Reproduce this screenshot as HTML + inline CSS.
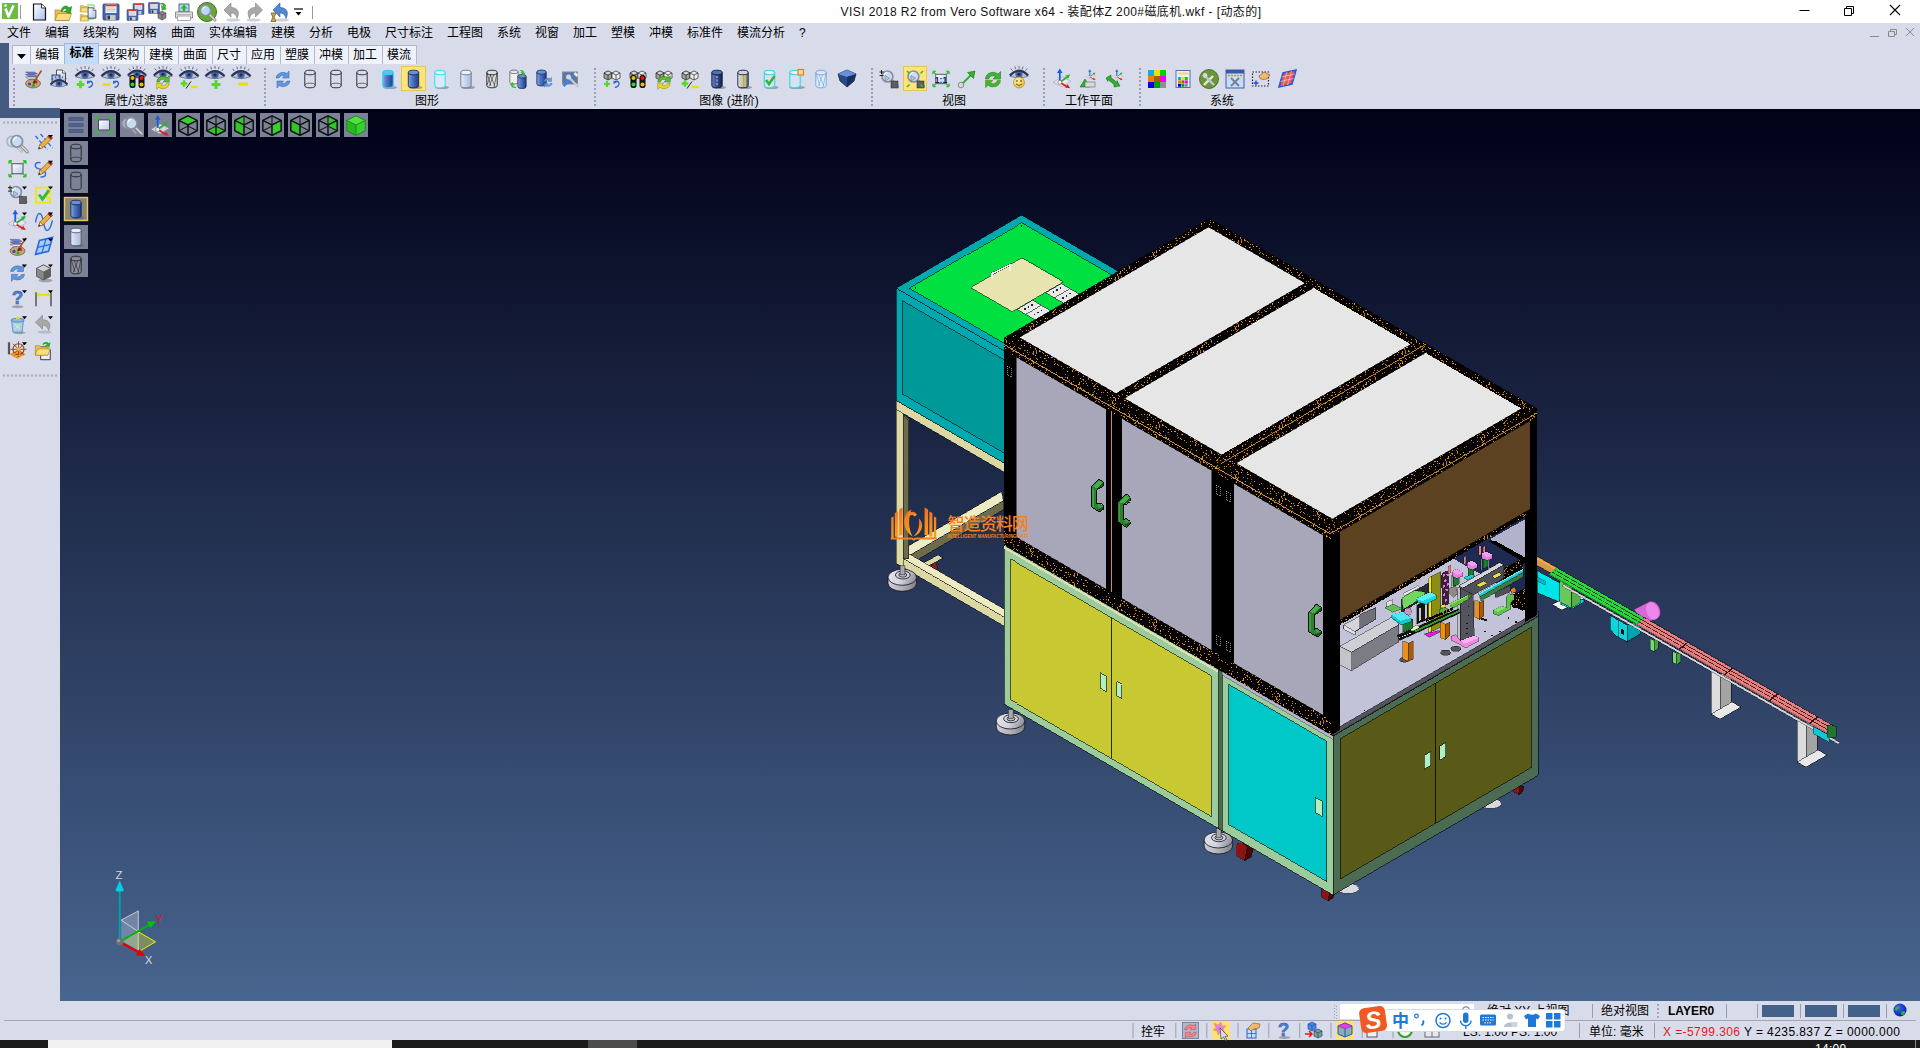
<!DOCTYPE html>
<html lang="zh-CN">
<head>
<meta charset="utf-8">
<title>VISI 2018 R2 from Vero Software x64 - 装配体Z 200#磁底机.wkf - [动态的]</title>
<style>
html,body{margin:0;padding:0;}
body{width:1920px;height:1048px;overflow:hidden;position:relative;background:#d8dcea;font-family:"Liberation Sans","Noto Sans CJK SC",sans-serif;font-size:12px;color:#000;}
.abs{position:absolute;}
#titlebar{left:0;top:0;width:1920px;height:23px;background:#fff;}
#title{left:838px;top:4px;width:426px;letter-spacing:0.42px;height:16px;line-height:16px;font-size:12px;white-space:nowrap;text-align:center;color:#111;}
#menubar{left:0;top:23px;width:1920px;height:20px;background:#d8dcea;}
.mi{position:absolute;top:2px;height:16px;line-height:16px;font-size:12px;white-space:nowrap;color:#000;}
#tabrow{left:0;top:43px;width:1920px;height:21px;background:#d8dcea;}
.tab{position:absolute;top:2px;height:19px;line-height:18px;font-size:12px;text-align:center;background:#eef2fb;border:1px solid #b4b8c6;border-bottom:none;box-sizing:border-box;white-space:nowrap;}
.tab.act{top:0;height:21px;line-height:19px;background:#c4dcf8;border-color:#98b8e0;font-weight:bold;}
#toolbar{left:9px;top:64px;width:1911px;height:44px;background:#d8dcea;}
.glabel{position:absolute;top:94px;height:14px;line-height:14px;font-size:12px;white-space:nowrap;transform:translateX(-50%);}
.grip{position:absolute;width:3px;border-left:2px dotted #9aa0b4;top:68px;height:38px;}
#mdi{left:0;top:43px;width:60px;height:75px;background:#445a80;}
#leftpanel{left:0;top:118px;width:60px;height:884px;background:#d8dcea;}
#viewport{left:60px;top:109px;width:1860px;height:892px;background:linear-gradient(to bottom,#010118 0%,#48658f 100%);overflow:hidden;}
#status1{left:0;top:1001px;width:1920px;height:20px;background:#d8dcea;}
#status2{left:0;top:1021px;width:1920px;height:19px;background:#d8dcea;}
#taskbar{overflow:hidden;left:0;top:1040px;width:1920px;height:8px;background:#1b1b1b;}
.st{position:absolute;white-space:nowrap;font-size:12px;line-height:16px;height:16px;}
.vsep{position:absolute;width:1px;background:#9a9eac;}
.ibtn{position:absolute;width:21px;height:21px;background:#7e8397;}
svg{position:absolute;overflow:visible;}
</style>
</head>
<body>
<div id="titlebar" class="abs"></div>
<div id="title" class="abs">VISI 2018 R2 from Vero Software x64 - 装配体Z 200#磁底机.wkf - [动态的]</div>
<div id="menubar" class="abs">
<span class="mi" style="left:7px">文件</span>
<span class="mi" style="left:45px">编辑</span>
<span class="mi" style="left:83px">线架构</span>
<span class="mi" style="left:133px">网格</span>
<span class="mi" style="left:171px">曲面</span>
<span class="mi" style="left:209px">实体编辑</span>
<span class="mi" style="left:271px">建模</span>
<span class="mi" style="left:309px">分析</span>
<span class="mi" style="left:347px">电极</span>
<span class="mi" style="left:385px">尺寸标注</span>
<span class="mi" style="left:447px">工程图</span>
<span class="mi" style="left:497px">系统</span>
<span class="mi" style="left:535px">视窗</span>
<span class="mi" style="left:573px">加工</span>
<span class="mi" style="left:611px">塑模</span>
<span class="mi" style="left:649px">冲模</span>
<span class="mi" style="left:687px">标准件</span>
<span class="mi" style="left:737px">模流分析</span>
<span class="mi" style="left:799px">?</span>
</div>
<div id="mdi" class="abs"></div>
<div id="tabrow" class="abs" style="left:9px;width:1911px">
<div class="tab" style="left:3.0px;width:18.5px"><svg width="9" height="5" style="left:4px;top:8px" viewBox="0 0 9 5"><path d="M0 0h9L4.5 5z" fill="#000"/></svg></div>
<div class="tab" style="left:20.5px;width:35.5px">编辑</div>
<div class="tab act" style="left:55.0px;width:35.0px">标准</div>
<div class="tab" style="left:89.0px;width:46.5px">线架构</div>
<div class="tab" style="left:134.5px;width:35.0px">建模</div>
<div class="tab" style="left:168.5px;width:35.0px">曲面</div>
<div class="tab" style="left:202.5px;width:35.0px">尺寸</div>
<div class="tab" style="left:236.5px;width:35.0px">应用</div>
<div class="tab" style="left:270.5px;width:35.0px">塑膜</div>
<div class="tab" style="left:304.5px;width:35.0px">冲模</div>
<div class="tab" style="left:338.5px;width:35.0px">加工</div>
<div class="tab" style="left:372.5px;width:35.0px">模流</div>
</div>
<div id="toolbar" class="abs"></div>
<div class="glabel" style="left:136px">属性/过滤器</div>
<div class="glabel" style="left:427px">图形</div>
<div class="glabel" style="left:729px">图像 (进阶)</div>
<div class="glabel" style="left:954px">视图</div>
<div class="glabel" style="left:1089px">工作平面</div>
<div class="glabel" style="left:1222px">系统</div>
<div class="grip" style="left:13px"></div>
<div class="grip" style="left:264px"></div>
<div class="grip" style="left:594px"></div>
<div class="grip" style="left:871px"></div>
<div class="grip" style="left:1043px"></div>
<div class="grip" style="left:1139px"></div>
<div id="leftpanel" class="abs"></div>
<div id="viewport" class="abs">
<svg style="left:-60px;top:-109px" width="1920" height="1048" viewBox="0 0 1920 1048" shape-rendering="crispEdges"><defs>
<linearGradient id="ftg" x1="0" y1="0" x2="1" y2="0"><stop offset="0" stop-color="#d0d0da"/><stop offset="0.5" stop-color="#b0b0ba"/><stop offset="1" stop-color="#808088"/></linearGradient>
<linearGradient id="ftt" x1="0" y1="0" x2="1" y2="0.3"><stop offset="0" stop-color="#e4e4f0"/><stop offset="0.6" stop-color="#d4d4e2"/><stop offset="1" stop-color="#9898a4"/></linearGradient>
<pattern id="fr" width="41" height="37" patternUnits="userSpaceOnUse"><rect width="41" height="37" fill="#040200"/><rect x="6" y="0" width="1" height="1" fill="#b87018"/><rect x="9" y="0" width="1" height="1" fill="#c88020"/><rect x="15" y="0" width="1" height="1" fill="#c88020"/><rect x="21" y="0" width="1" height="1" fill="#d89028"/><rect x="24" y="0" width="1" height="1" fill="#e09830"/><rect x="1" y="1" width="1" height="1" fill="#f0a838"/><rect x="6" y="1" width="1" height="1" fill="#f0a838"/><rect x="12" y="1" width="1" height="1" fill="#e09830"/><rect x="12" y="2" width="1" height="1" fill="#d89028"/><rect x="20" y="2" width="1" height="1" fill="#e09830"/><rect x="31" y="2" width="1" height="1" fill="#b87018"/><rect x="29" y="3" width="1" height="1" fill="#d89028"/><rect x="12" y="4" width="1" height="1" fill="#b87018"/><rect x="22" y="4" width="1" height="1" fill="#c88020"/><rect x="40" y="4" width="1" height="1" fill="#c88020"/><rect x="2" y="5" width="1" height="1" fill="#b87018"/><rect x="7" y="6" width="1" height="1" fill="#f0a838"/><rect x="17" y="6" width="1" height="1" fill="#d89028"/><rect x="21" y="6" width="1" height="1" fill="#b87018"/><rect x="1" y="7" width="1" height="1" fill="#f0a838"/><rect x="22" y="7" width="1" height="1" fill="#b87018"/><rect x="34" y="7" width="1" height="1" fill="#c88020"/><rect x="37" y="7" width="1" height="1" fill="#e09830"/><rect x="40" y="7" width="1" height="1" fill="#b87018"/><rect x="1" y="8" width="1" height="1" fill="#e09830"/><rect x="14" y="8" width="1" height="1" fill="#e09830"/><rect x="22" y="8" width="1" height="1" fill="#e09830"/><rect x="28" y="8" width="1" height="1" fill="#f0a838"/><rect x="16" y="9" width="1" height="1" fill="#b87018"/><rect x="17" y="9" width="1" height="1" fill="#c88020"/><rect x="22" y="9" width="1" height="1" fill="#b87018"/><rect x="3" y="10" width="1" height="1" fill="#c88020"/><rect x="17" y="10" width="1" height="1" fill="#b87018"/><rect x="25" y="10" width="1" height="1" fill="#e09830"/><rect x="29" y="10" width="1" height="1" fill="#e09830"/><rect x="40" y="10" width="1" height="1" fill="#c88020"/><rect x="7" y="11" width="1" height="1" fill="#b87018"/><rect x="15" y="11" width="1" height="1" fill="#e09830"/><rect x="19" y="11" width="1" height="1" fill="#d89028"/><rect x="31" y="11" width="1" height="1" fill="#b87018"/><rect x="5" y="12" width="1" height="1" fill="#c88020"/><rect x="13" y="12" width="1" height="1" fill="#f0a838"/><rect x="37" y="12" width="1" height="1" fill="#f0a838"/><rect x="40" y="12" width="1" height="1" fill="#f0a838"/><rect x="13" y="13" width="1" height="1" fill="#c88020"/><rect x="17" y="13" width="1" height="1" fill="#d89028"/><rect x="20" y="13" width="1" height="1" fill="#e09830"/><rect x="26" y="13" width="1" height="1" fill="#d89028"/><rect x="30" y="13" width="1" height="1" fill="#d89028"/><rect x="5" y="14" width="1" height="1" fill="#c88020"/><rect x="12" y="14" width="1" height="1" fill="#e09830"/><rect x="13" y="14" width="1" height="1" fill="#d89028"/><rect x="29" y="14" width="1" height="1" fill="#b87018"/><rect x="34" y="14" width="1" height="1" fill="#c88020"/><rect x="10" y="15" width="1" height="1" fill="#e09830"/><rect x="21" y="15" width="1" height="1" fill="#c88020"/><rect x="28" y="15" width="1" height="1" fill="#e09830"/><rect x="35" y="15" width="1" height="1" fill="#c88020"/><rect x="36" y="15" width="1" height="1" fill="#e09830"/><rect x="10" y="16" width="1" height="1" fill="#b87018"/><rect x="27" y="16" width="1" height="1" fill="#c88020"/><rect x="28" y="16" width="1" height="1" fill="#b87018"/><rect x="31" y="16" width="1" height="1" fill="#d89028"/><rect x="0" y="17" width="1" height="1" fill="#f0a838"/><rect x="2" y="17" width="1" height="1" fill="#e09830"/><rect x="11" y="17" width="1" height="1" fill="#b87018"/><rect x="14" y="17" width="1" height="1" fill="#c88020"/><rect x="40" y="17" width="1" height="1" fill="#c88020"/><rect x="8" y="18" width="1" height="1" fill="#d89028"/><rect x="11" y="18" width="1" height="1" fill="#b87018"/><rect x="14" y="18" width="1" height="1" fill="#f0a838"/><rect x="15" y="18" width="1" height="1" fill="#b87018"/><rect x="28" y="18" width="1" height="1" fill="#b87018"/><rect x="29" y="18" width="1" height="1" fill="#b87018"/><rect x="2" y="19" width="1" height="1" fill="#c88020"/><rect x="4" y="19" width="1" height="1" fill="#f0a838"/><rect x="8" y="19" width="1" height="1" fill="#c88020"/><rect x="11" y="19" width="1" height="1" fill="#d89028"/><rect x="17" y="19" width="1" height="1" fill="#b87018"/><rect x="32" y="19" width="1" height="1" fill="#c88020"/><rect x="7" y="20" width="1" height="1" fill="#b87018"/><rect x="8" y="20" width="1" height="1" fill="#b87018"/><rect x="11" y="20" width="1" height="1" fill="#b87018"/><rect x="18" y="20" width="1" height="1" fill="#c88020"/><rect x="39" y="20" width="1" height="1" fill="#e09830"/><rect x="3" y="21" width="1" height="1" fill="#c88020"/><rect x="8" y="21" width="1" height="1" fill="#d89028"/><rect x="28" y="21" width="1" height="1" fill="#c88020"/><rect x="0" y="22" width="1" height="1" fill="#e09830"/><rect x="10" y="22" width="1" height="1" fill="#f0a838"/><rect x="20" y="22" width="1" height="1" fill="#f0a838"/><rect x="22" y="22" width="1" height="1" fill="#e09830"/><rect x="27" y="22" width="1" height="1" fill="#b87018"/><rect x="35" y="22" width="1" height="1" fill="#d89028"/><rect x="37" y="22" width="1" height="1" fill="#b87018"/><rect x="30" y="23" width="1" height="1" fill="#b87018"/><rect x="15" y="24" width="1" height="1" fill="#d89028"/><rect x="23" y="24" width="1" height="1" fill="#f0a838"/><rect x="26" y="24" width="1" height="1" fill="#f0a838"/><rect x="27" y="24" width="1" height="1" fill="#e09830"/><rect x="35" y="24" width="1" height="1" fill="#d89028"/><rect x="0" y="25" width="1" height="1" fill="#b87018"/><rect x="5" y="25" width="1" height="1" fill="#d89028"/><rect x="11" y="25" width="1" height="1" fill="#d89028"/><rect x="19" y="25" width="1" height="1" fill="#f0a838"/><rect x="20" y="25" width="1" height="1" fill="#b87018"/><rect x="12" y="26" width="1" height="1" fill="#d89028"/><rect x="29" y="26" width="1" height="1" fill="#c88020"/><rect x="3" y="27" width="1" height="1" fill="#b87018"/><rect x="6" y="27" width="1" height="1" fill="#d89028"/><rect x="7" y="27" width="1" height="1" fill="#e09830"/><rect x="21" y="27" width="1" height="1" fill="#d89028"/><rect x="33" y="27" width="1" height="1" fill="#b87018"/><rect x="34" y="27" width="1" height="1" fill="#e09830"/><rect x="1" y="28" width="1" height="1" fill="#d89028"/><rect x="8" y="28" width="1" height="1" fill="#b87018"/><rect x="11" y="28" width="1" height="1" fill="#f0a838"/><rect x="17" y="28" width="1" height="1" fill="#e09830"/><rect x="29" y="28" width="1" height="1" fill="#b87018"/><rect x="8" y="29" width="1" height="1" fill="#d89028"/><rect x="1" y="30" width="1" height="1" fill="#b87018"/><rect x="4" y="30" width="1" height="1" fill="#d89028"/><rect x="6" y="30" width="1" height="1" fill="#d89028"/><rect x="8" y="30" width="1" height="1" fill="#f0a838"/><rect x="17" y="30" width="1" height="1" fill="#e09830"/><rect x="18" y="30" width="1" height="1" fill="#d89028"/><rect x="30" y="30" width="1" height="1" fill="#b87018"/><rect x="5" y="31" width="1" height="1" fill="#c88020"/><rect x="20" y="31" width="1" height="1" fill="#f0a838"/><rect x="29" y="31" width="1" height="1" fill="#e09830"/><rect x="32" y="31" width="1" height="1" fill="#e09830"/><rect x="5" y="32" width="1" height="1" fill="#f0a838"/><rect x="33" y="32" width="1" height="1" fill="#c88020"/><rect x="5" y="33" width="1" height="1" fill="#b87018"/><rect x="6" y="33" width="1" height="1" fill="#b87018"/><rect x="8" y="33" width="1" height="1" fill="#c88020"/><rect x="13" y="33" width="1" height="1" fill="#e09830"/><rect x="36" y="33" width="1" height="1" fill="#d89028"/><rect x="1" y="34" width="1" height="1" fill="#c88020"/><rect x="3" y="34" width="1" height="1" fill="#c88020"/><rect x="7" y="34" width="1" height="1" fill="#e09830"/><rect x="17" y="34" width="1" height="1" fill="#d89028"/><rect x="6" y="35" width="1" height="1" fill="#e09830"/><rect x="21" y="35" width="1" height="1" fill="#b87018"/><rect x="38" y="35" width="1" height="1" fill="#b87018"/><rect x="7" y="36" width="1" height="1" fill="#d89028"/></pattern>
</defs>
<polygon points="908.4,556.0 1003.5,500.6 1003.5,509.6 908.4,565.0" fill="#6c6c4c" stroke="#000" stroke-width="0.5" />
<polygon points="899.8,551.0 1001.7,491.5 1003.5,500.6 908.4,556.0" fill="#ecebc4" stroke="#000" stroke-width="0.5" />
<polygon points="918.0,566.0 938.0,555.0 943.0,558.0 923.0,569.0" fill="#dcd8a4" stroke="#000" stroke-width="0.5" />
<polygon points="931.0,565.0 936.0,562.0 938.0,570.0 933.0,573.0" fill="#802020" stroke="#000" stroke-width="0.4" />
<polygon points="896.3,554.5 1004.9,617.5 1004.9,626.5 896.3,563.5" fill="#dcd8a4" stroke="#000" stroke-width="0.5" />
<polygon points="896.3,554.5 910.1,554.5 1011.8,613.5 1004.9,617.5" fill="#ecebc4" stroke="#000" stroke-width="0.5" />
<polygon points="896.3,400.5 903.2,404.5 903.2,567.5 896.3,563.5" fill="#dcd8a4" stroke="#000" stroke-width="0.5" />
<polygon points="903.2,413.5 908.9,419.8 908.9,558.8 903.2,558.5" fill="#6c6c4c" stroke="#000" stroke-width="0.5" />
<polygon points="896.3,400.5 1004.9,463.5 1004.9,472.5 896.3,409.5" fill="#dcd8a4" stroke="#000" stroke-width="0.5" />
<g shape-rendering="auto">
<path d="M888.0 577.3 v6 a14.3 8 0 0 0 28.6 0 v-6 z" fill="url(#ftg)" stroke="#111" stroke-width="0.8"/>
<ellipse cx="902.3" cy="577.3" rx="14.3" ry="8" fill="url(#ftt)" stroke="#111" stroke-width="0.8"/>
<ellipse cx="902.8" cy="575.0" rx="7.4" ry="4" fill="#d0d0da" stroke="#111" stroke-width="0.8"/>
<ellipse cx="902.8" cy="575.0" rx="4" ry="2.2" fill="#b8b8c4" stroke="#111" stroke-width="0.7"/>
<rect x="900.1" y="565.8" width="4.8" height="9" fill="#a8a8b2" stroke="#222" stroke-width="0.5"/>
</g>
<polygon points="896.3,288.2 1004.0,350.7 1004.0,463.0 896.3,400.5" fill="#00a8b0" stroke="#000" stroke-width="0.6" />
<polygon points="902.4,300.7 1004.0,359.7 1004.0,453.0 902.4,394.0" fill="#009999" stroke="#000" stroke-width="0.6" />
<polygon points="896.3,288.2 1021.6,215.1 1129.3,277.6 1004.0,350.7" fill="#00a8b0" stroke="#000" stroke-width="0.6" />
<polygon points="909.3,288.2 1021.6,222.7 1122.8,281.4 1010.5,346.9" fill="#00e040" stroke="#000" stroke-width="0.6" />
<polygon points="970.7,287.6 1021.5,258.0 1063.0,282.1 1012.3,311.7" fill="#e8e4b0" stroke="#000" stroke-width="0.5" />
<polygon points="1045.7,292.8 1061.3,283.7 1079.4,294.2 1063.9,303.3" fill="#e8e8e8" stroke="#000" stroke-width="0.5" />
<line x1="1054.3" y1="297.8" x2="1069.9" y2="288.7" stroke="#444" stroke-width="0.8" />
<circle cx="1053.5" cy="292.3" r="0.9" fill="#222"/>
<circle cx="1060.4" cy="288.2" r="0.9" fill="#222"/>
<circle cx="1063.0" cy="297.8" r="0.9" fill="#222"/>
<circle cx="1069.9" cy="293.7" r="0.9" fill="#222"/>
<circle cx="1056.9" cy="290.2" r="0.9" fill="#222"/>
<circle cx="1066.4" cy="295.8" r="0.9" fill="#222"/>
<polygon points="1017.2,309.4 1032.7,300.3 1050.9,310.9 1035.4,319.9" fill="#e8e8e8" stroke="#000" stroke-width="0.5" />
<line x1="1025.8" y1="314.4" x2="1041.4" y2="305.3" stroke="#444" stroke-width="0.8" />
<circle cx="1025.0" cy="308.9" r="0.9" fill="#222"/>
<circle cx="1031.9" cy="304.9" r="0.9" fill="#222"/>
<circle cx="1034.5" cy="314.4" r="0.9" fill="#222"/>
<circle cx="1041.4" cy="310.4" r="0.9" fill="#222"/>
<circle cx="1028.4" cy="306.9" r="0.9" fill="#222"/>
<circle cx="1037.9" cy="312.4" r="0.9" fill="#222"/>
<polyline points="992.0,278.0 992.0,273.5 1010.0,265.0 1010.0,271.0" fill="none" stroke="#555" stroke-width="2.4" />
<polyline points="992.0,278.0 992.0,273.5 1010.0,265.0 1010.0,271.0" fill="none" stroke="#f0f0f0" stroke-width="1.4" />
<circle cx="1021.6" cy="226.2" r="0.8" fill="#111"/>
<circle cx="915.3" cy="288.2" r="0.8" fill="#111"/>
<g shape-rendering="auto">
<path d="M996.2 721.0 v6 a14.3 8 0 0 0 28.6 0 v-6 z" fill="url(#ftg)" stroke="#111" stroke-width="0.8"/>
<ellipse cx="1010.5" cy="721.0" rx="14.3" ry="8" fill="url(#ftt)" stroke="#111" stroke-width="0.8"/>
<ellipse cx="1011.0" cy="718.7" rx="7.4" ry="4" fill="#d0d0da" stroke="#111" stroke-width="0.8"/>
<ellipse cx="1011.0" cy="718.7" rx="4" ry="2.2" fill="#b8b8c4" stroke="#111" stroke-width="0.7"/>
<rect x="1008.3" y="709.5" width="4.8" height="9" fill="#a8a8b2" stroke="#222" stroke-width="0.5"/>
</g>
<g shape-rendering="auto">
<path d="M1204.1 840.0 v6 a14.3 8 0 0 0 28.6 0 v-6 z" fill="url(#ftg)" stroke="#111" stroke-width="0.8"/>
<ellipse cx="1218.4" cy="840.0" rx="14.3" ry="8" fill="url(#ftt)" stroke="#111" stroke-width="0.8"/>
<ellipse cx="1218.9" cy="837.7" rx="7.4" ry="4" fill="#d0d0da" stroke="#111" stroke-width="0.8"/>
<ellipse cx="1218.9" cy="837.7" rx="4" ry="2.2" fill="#b8b8c4" stroke="#111" stroke-width="0.7"/>
<rect x="1216.2" y="828.5" width="4.8" height="9" fill="#a8a8b2" stroke="#222" stroke-width="0.5"/>
</g>
<ellipse cx="1490.3" cy="803.5" rx="11" ry="5" fill="#d8d8de" stroke="#333" stroke-width="0.5"/>
<ellipse cx="1348.0" cy="888.5" rx="11" ry="5" fill="#d8d8de" stroke="#333" stroke-width="0.5"/>
<polygon points="1236.5,843.9 1242.7,842.9 1253.7,848.1 1250.8,857.2 1244.6,860.6 1236.0,855.3" fill="#4c0808" stroke="#000" stroke-width="0.6" />
<polygon points="1236.5,843.9 1242.7,842.9 1247.0,847.5 1244.6,860.6 1236.0,855.3" fill="#8c1414" />
<line x1="1247.0" y1="847.5" x2="1244.6" y2="860.6" stroke="#200" stroke-width="0.8" />
<polygon points="1322.0,888.3 1326.7,887.5 1334.9,891.5 1332.7,898.3 1328.1,900.8 1321.6,896.9" fill="#4c0808" stroke="#000" stroke-width="0.6" />
<polygon points="1322.0,888.3 1326.7,887.5 1329.9,891.0 1328.1,900.8 1321.6,896.9" fill="#8c1414" />
<line x1="1329.9" y1="891.0" x2="1328.1" y2="900.8" stroke="#200" stroke-width="0.8" />
<polygon points="1513.6,784.4 1517.3,783.8 1523.9,787.0 1522.2,792.4 1518.5,794.5 1513.3,791.3" fill="#4c0808" stroke="#000" stroke-width="0.6" />
<polygon points="1513.6,784.4 1517.3,783.8 1519.9,786.6 1518.5,794.5 1513.3,791.3" fill="#8c1414" />
<line x1="1519.9" y1="786.6" x2="1518.5" y2="794.5" stroke="#200" stroke-width="0.8" />
<polygon points="1004.0,545.0 1220.6,670.7 1220.6,829.7 1004.0,704.0" fill="#9ccc9c" stroke="#000" stroke-width="0.6" />
<polygon points="1004.0,546.2 1220.6,671.9 1220.6,674.2 1004.0,548.5" fill="#e0e0b8" />
<polygon points="1010.5,559.2 1211.3,675.7 1211.3,816.5 1010.5,700.0" fill="#c8c832" stroke="#000" stroke-width="0.6" />
<line x1="1111.3" y1="617.6" x2="1111.3" y2="758.4" stroke="#000" stroke-width="0.8" />
<polygon points="1100.2,672.7 1106.0,676.0 1106.0,691.5 1100.2,688.2" fill="#b0f0c0" stroke="#000" stroke-width="0.6" />
<polygon points="1116.5,681.5 1121.8,684.5 1121.8,699.0 1116.5,696.0" fill="#b0f0c0" stroke="#000" stroke-width="0.6" />
<polygon points="1218.4,669.4 1222.8,672.0 1222.8,831.0 1218.4,828.4" fill="#4a6a50" stroke="#000" stroke-width="0.4" />
<polygon points="1222.3,671.7 1333.1,736.0 1333.1,895.0 1222.3,830.7" fill="#9ccc9c" stroke="#000" stroke-width="0.6" />
<polygon points="1228.7,684.4 1326.8,741.3 1326.8,881.5 1228.7,824.6" fill="#00c8c8" stroke="#000" stroke-width="0.6" />
<polygon points="1222.3,671.7 1333.1,736.0 1333.1,739.5 1222.3,675.2" fill="#b4b4cc" stroke="#000" stroke-width="0.3" />
<polygon points="1315.3,797.4 1322.2,801.4 1322.2,816.5 1315.3,812.5" fill="#b0f0c0" stroke="#000" stroke-width="0.6" />
<polygon points="1333.1,736.0 1538.3,616.3 1538.3,775.3 1333.1,895.0" fill="#4b6b52" stroke="#000" stroke-width="0.6" />
<polygon points="1333.1,731.0 1538.3,611.3 1538.3,616.3 1333.1,736.0" fill="#54545e" stroke="#000" stroke-width="0.4" />
<polygon points="1340.2,738.8 1531.2,627.4 1531.2,767.6 1340.2,879.0" fill="#5a5a18" stroke="#000" stroke-width="0.6" />
<line x1="1435.5" y1="683.2" x2="1435.5" y2="823.4" stroke="#000" stroke-width="0.8" />
<polygon points="1424.1,755.5 1430.7,751.7 1430.7,765.5 1424.1,769.3" fill="#b0f0c0" stroke="#000" stroke-width="0.6" />
<polygon points="1439.8,746.2 1445.5,742.8 1445.5,756.8 1439.8,760.2" fill="#b0f0c0" stroke="#000" stroke-width="0.6" />
<polygon points="1711.0,669.0 1720.0,674.0 1720.0,719.0 1711.0,714.0" fill="#dcdcdc" stroke="#000" stroke-width="0.5" />
<polygon points="1720.0,674.0 1731.0,668.0 1731.0,706.0 1720.0,719.0" fill="#a4a4a4" stroke="#000" stroke-width="0.5" />
<polygon points="1711.0,714.0 1720.0,719.0 1741.0,707.0 1732.0,702.0" fill="#e8e8e8" stroke="#000" stroke-width="0.5" />
<polygon points="1797.0,719.0 1806.0,724.0 1806.0,767.0 1797.0,762.0" fill="#dcdcdc" stroke="#000" stroke-width="0.5" />
<polygon points="1806.0,724.0 1817.0,718.0 1817.0,754.0 1806.0,767.0" fill="#a4a4a4" stroke="#000" stroke-width="0.5" />
<polygon points="1797.0,762.0 1806.0,767.0 1827.0,755.0 1818.0,750.0" fill="#e8e8e8" stroke="#000" stroke-width="0.5" />
<polygon points="1650.0,638.5 1654.0,640.5 1654.0,651.5 1650.0,649.5" fill="#78d878" stroke="#000" stroke-width="0.4" />
<polygon points="1654.0,640.5 1658.0,638.5 1658.0,648.5 1654.0,651.5" fill="#48a048" stroke="#000" stroke-width="0.4" />
<polygon points="1672.5,651.5 1676.5,653.5 1676.5,664.5 1672.5,662.5" fill="#78d878" stroke="#000" stroke-width="0.4" />
<polygon points="1676.5,653.5 1680.5,651.5 1680.5,661.5 1676.5,664.5" fill="#48a048" stroke="#000" stroke-width="0.4" />
<polygon points="1537.0,570.6 1560.0,583.2 1560.0,602.3 1537.0,592.7" fill="#00e4e8" stroke="#000" stroke-width="0.5" />
<polygon points="1537.0,577.0 1545.0,581.0 1545.0,585.0 1537.0,581.0" fill="#00b8c8" stroke="#000" stroke-width="0.3" />
<polygon points="1552.0,604.5 1562.0,610.0 1585.0,598.0 1575.0,593.0" fill="#f4f4f4" stroke="#000" stroke-width="0.5" />
<polygon points="1560.0,604.0 1572.0,609.0 1585.0,601.0 1573.0,596.0" fill="#00d8e0" stroke="#000" stroke-width="0.4" />
<polygon points="1559.8,579.6 1571.8,586.0 1571.8,608.2 1559.8,602.0" fill="#68c858" stroke="#000" stroke-width="0.5" />
<polygon points="1571.8,590.0 1580.0,594.0 1580.0,603.0 1571.8,608.0" fill="#58b048" stroke="#000" stroke-width="0.4" />
<polygon points="1610.0,615.4 1627.0,625.0 1627.0,641.6 1616.0,636.0 1610.0,629.0" fill="#10d4dc" stroke="#000" stroke-width="0.5" />
<polygon points="1627.0,625.0 1640.0,619.0 1640.0,634.0 1627.0,641.6" fill="#00a4b0" stroke="#000" stroke-width="0.5" />
<line x1="1618.0" y1="620.0" x2="1618.0" y2="637.0" stroke="#006870" stroke-width="0.8" />
<polygon points="1621.0,629.0 1624.0,630.0 1624.0,635.0 1621.0,634.0" fill="#111" />
<path d="M1634 609.5l14 -7.200a6.500 9 -28 0 1 10.300 15.500l-14 6z" fill="#d868d8" stroke="#401040" stroke-width="0.400" shape-rendering="auto"/>
<ellipse cx="1652.500" cy="611" rx="6" ry="9" fill="#ec88ec" transform="rotate(-22 1652.500 611)" shape-rendering="auto"/>
<polygon points="1563.8,584.6 1839.8,742.5 1838.0,744.0 1562.0,586.1" fill="#d4d4d4" stroke="#000" stroke-width="0.3" />
<polygon points="1537.0,556.3 1559.0,568.9 1552.6,574.2 1530.6,561.6" fill="#d89848" stroke="#000" stroke-width="0.4" />
<polygon points="1536.3,556.9 1558.3,569.5 1556.9,570.7 1534.9,558.1" fill="#f0a850" />
<polygon points="1556.8,567.6 1644.5,617.8 1636.3,624.6 1548.6,574.5" fill="#0c3812" stroke="#000" stroke-width="0.3" />
<polygon points="1556.5,567.9 1644.2,618.0 1642.3,619.6 1554.6,569.5" fill="#28d838" />
<polygon points="1554.0,570.0 1641.7,620.2 1639.7,621.8 1552.0,571.6" fill="#28d838" />
<polygon points="1551.4,572.1 1639.1,622.3 1637.2,623.9 1549.5,573.7" fill="#28d838" />
<polygon points="1549.5,573.7 1637.2,623.9 1636.3,624.6 1548.6,574.5" fill="#1c9028" />
<polygon points="1644.5,617.8 1835.0,726.8 1826.8,733.6 1636.3,624.6" fill="#5a2020" stroke="#000" stroke-width="0.3" />
<polygon points="1644.2,618.0 1834.7,727.0 1832.8,728.6 1642.3,619.6" fill="#e08080" />
<polygon points="1641.7,620.2 1832.2,729.1 1830.2,730.7 1639.7,621.8" fill="#e08080" />
<polygon points="1639.1,622.3 1829.6,731.3 1827.7,732.9 1637.2,623.9" fill="#e08080" />
<polygon points="1637.2,623.9 1827.7,732.9 1826.8,733.6 1636.3,624.6" fill="#b05858" />
<polygon points="1687.0,642.1 1688.2,642.8 1680.0,649.6 1678.8,648.9" fill="#3a1010" />
<polygon points="1732.0,667.8 1733.2,668.5 1725.0,675.4 1723.8,674.7" fill="#3a1010" />
<polygon points="1777.0,693.6 1778.2,694.3 1770.0,701.1 1768.8,700.4" fill="#3a1010" />
<polygon points="1817.0,716.5 1818.2,717.1 1810.0,724.0 1808.8,723.3" fill="#3a1010" />
<polygon points="1813.0,726.2 1829.0,735.3 1829.0,742.3 1813.0,733.2" fill="#10c8d4" stroke="#000" stroke-width="0.4" />
<polygon points="1827.0,725.2 1836.0,726.3 1836.0,737.3 1827.0,737.2" fill="#207830" stroke="#000" stroke-width="0.4" />
<polygon points="1339.2,609.9 1524.6,504.6 1537.2,504.6 1537.2,616.8 1339.2,728.9" fill="#1e2a52" />
<polygon points="1490.3,538.9 1524.6,519.5 1524.6,560.0 1495.3,544.0" fill="#b2b2ca" />
<polygon points="1339.2,728.9 1339.2,591.6 1405.5,532.1 1524.6,598.4 1536.0,607.6 1536.0,615.6" fill="#c2c2d8" />
<polygon points="1506.3,598.4 1524.6,588.1 1524.6,609.9 1513.2,607.6" fill="url(#fr)" />
<polygon points="1488.0,576.7 1524.6,557.2 1524.6,563.0 1490.3,580.1" fill="url(#fr)" />
<polygon points="1488.0,540.8 1495.3,540.8 1524.6,557.2 1524.6,563.0" fill="#000" />
<polygon points="1339.6,646.5 1398.7,613.3 1398.7,624.8 1351.7,652.2" fill="#cfcfd6" stroke="#000" stroke-width="0.4" />
<polygon points="1351.7,652.2 1398.7,624.8 1398.7,641.9 1351.7,670.6" fill="#7c7c84" stroke="#000" stroke-width="0.4" />
<polygon points="1339.6,646.5 1351.7,652.2 1351.7,670.6 1339.6,664.8" fill="#c4c4cc" stroke="#000" stroke-width="0.4" />
<polygon points="1343.7,624.8 1375.8,607.6 1375.8,619.0 1355.2,631.6 1343.7,629.3" fill="#d4d4da" stroke="#000" stroke-width="0.4" />
<polygon points="1355.2,631.6 1375.8,619.0 1375.8,607.6 1359.8,614.5 1359.8,628.2" fill="#707078" stroke="#000" stroke-width="0.4" />
<polygon points="1343.7,629.3 1355.2,635.1 1355.2,631.6 1343.7,624.8" fill="#e0e0e4" stroke="#000" stroke-width="0.4" />
<ellipse cx="1445.6" cy="652.7" rx="5.0" ry="2.7" fill="#54545c" stroke="#000" stroke-width="0.4"/>
<ellipse cx="1455.9" cy="648.8" rx="5.0" ry="2.5" fill="#54545c" stroke="#000" stroke-width="0.4"/>
<ellipse cx="1404.4" cy="659.8" rx="4.6" ry="2.3" fill="#54545c" stroke="#000" stroke-width="0.4"/>
<circle cx="1364.3" cy="710.2" r="0.6" fill="#222"/>
<circle cx="1485.7" cy="631.6" r="0.6" fill="#222"/>
<circle cx="1500.6" cy="631.6" r="0.6" fill="#222"/>
<circle cx="1508.6" cy="617.9" r="0.6" fill="#222"/>
<circle cx="1491.4" cy="635.1" r="0.6" fill="#222"/>
<polygon points="1501.4,573.2 1523.2,561.8 1523.2,568.6 1503.7,579.5" fill="url(#fr)" />
<polygon points="1509.4,596.1 1523.2,601.9 1523.2,611.0 1510.6,604.1" fill="url(#fr)" />
<polygon points="1400.6,599.6 1441.9,574.4 1441.9,588.1 1400.6,613.3" fill="#2a2a30" />
<polygon points="1402.9,593.8 1417.8,585.8 1419.5,587.5 1404.6,596.1" fill="#e8e8e8" stroke="#000" stroke-width="0.35" />
<polygon points="1386.9,601.9 1392.6,599.6 1392.6,606.4 1386.9,608.7" fill="#e0e0e0" stroke="#000" stroke-width="0.35" />
<polygon points="1428.7,577.8 1431.2,576.4 1431.2,631.6 1428.7,633.0" fill="#f0e818" stroke="#000" stroke-width="0.35" />
<polygon points="1431.2,576.4 1440.9,571.5 1440.9,627.1 1431.2,631.6" fill="#8c8c18" stroke="#000" stroke-width="0.35" />
<polygon points="1441.9,573.2 1448.7,570.0 1448.7,604.1 1441.9,607.6" fill="#3a2038" />
<polygon points="1442.8,574.4 1444.8,573.4 1445.3,575.5 1443.2,576.7" fill="#e070e0" />
<polygon points="1444.1,580.1 1446.2,579.2 1446.7,581.2 1444.6,582.4" fill="#e070e0" />
<polygon points="1442.4,585.8 1444.5,584.9 1444.9,587.0 1442.9,588.1" fill="#e070e0" />
<polygon points="1445.3,589.3 1447.4,588.3 1447.8,590.4 1445.8,591.5" fill="#e070e0" />
<polygon points="1443.0,593.8 1445.1,592.9 1445.5,595.0 1443.5,596.1" fill="#e070e0" />
<polygon points="1444.7,599.6 1446.8,598.6 1447.2,600.7 1445.2,601.9" fill="#e070e0" />
<polygon points="1446.4,574.4 1448.5,573.4 1449.0,575.5 1446.9,576.7" fill="#e070e0" />
<polygon points="1447.0,583.5 1449.1,582.6 1449.5,584.7 1447.5,585.8" fill="#e070e0" />
<polygon points="1478.7,546.3 1481.0,545.4 1481.0,554.5 1478.7,555.5" fill="#e88080" stroke="#000" stroke-width="0.25" />
<polygon points="1463.6,557.2 1465.9,556.3 1465.9,563.7 1463.6,564.6" fill="#e88080" stroke="#000" stroke-width="0.25" />
<polygon points="1448.4,566.1 1450.7,565.2 1450.7,572.6 1448.4,573.6" fill="#e88080" stroke="#000" stroke-width="0.25" />
<polygon points="1483.1,546.9 1485.4,546.0 1485.4,552.8 1483.1,553.7" fill="#e88080" stroke="#000" stroke-width="0.25" />
<polygon points="1483.1,559.5 1488.8,557.0 1488.8,566.3 1483.1,568.6" fill="#1c7c30" stroke="#000" stroke-width="0.35" />
<polygon points="1481.9,553.7 1486.5,551.5 1492.3,554.9 1492.3,558.3 1487.1,560.6 1481.9,558.3" fill="#e880e0" stroke="#000" stroke-width="0.35" />
<polygon points="1481.9,553.7 1486.5,551.5 1492.3,554.9 1487.4,557.2" fill="#f4a0f0" />
<polygon points="1468.2,568.6 1473.9,566.1 1473.9,575.5 1468.2,577.8" fill="#1c7c30" stroke="#000" stroke-width="0.35" />
<polygon points="1467.1,562.9 1471.6,560.6 1477.4,564.1 1477.4,567.5 1472.2,569.8 1467.1,567.5" fill="#e880e0" stroke="#000" stroke-width="0.35" />
<polygon points="1467.1,562.9 1471.6,560.6 1477.4,564.1 1472.6,566.3" fill="#f4a0f0" />
<polygon points="1453.3,577.2 1459.0,574.7 1459.0,584.1 1453.3,586.4" fill="#1c7c30" stroke="#000" stroke-width="0.35" />
<polygon points="1452.2,571.5 1456.7,569.2 1462.5,572.6 1462.5,576.1 1457.3,578.4 1452.2,576.1" fill="#e880e0" stroke="#000" stroke-width="0.35" />
<polygon points="1452.2,571.5 1456.7,569.2 1462.5,572.6 1457.7,574.9" fill="#f4a0f0" />
<polygon points="1480.8,559.5 1481.9,559.0 1481.9,569.8 1480.8,570.2" fill="#9c9ca4" stroke="#000" stroke-width="0.2" />
<polygon points="1487.7,560.6 1488.8,560.2 1488.8,570.9 1487.7,571.4" fill="#9c9ca4" stroke="#000" stroke-width="0.2" />
<polygon points="1451.0,575.5 1452.2,575.1 1452.2,585.8 1451.0,586.3" fill="#9c9ca4" stroke="#000" stroke-width="0.2" />
<polygon points="1463.6,577.8 1471.6,574.4 1475.1,576.1 1467.1,579.9" fill="#20d0d8" stroke="#000" stroke-width="0.35" />
<polygon points="1459.0,585.8 1499.7,562.7 1503.5,564.6 1503.5,578.4 1473.4,594.8 1460.2,588.7" fill="#50505a" stroke="#000" stroke-width="0.35" />
<polygon points="1459.0,585.8 1499.7,562.7 1503.5,564.6 1462.5,587.9" fill="#d4d4dc" stroke="#000" stroke-width="0.35" />
<polygon points="1476.2,584.9 1483.1,581.2 1487.1,583.3 1479.9,587.2" fill="#e8e040" stroke="#000" stroke-width="0.35" />
<polygon points="1492.3,575.7 1499.1,572.5 1501.6,574.4 1494.5,578.5" fill="#e8e040" stroke="#000" stroke-width="0.35" />
<polygon points="1494.5,592.1 1510.0,585.2 1510.0,592.1 1495.7,597.8" fill="#50505a" stroke="#000" stroke-width="0.35" />
<polygon points="1479.7,596.9 1523.2,572.3 1523.2,576.9 1481.0,600.9" fill="#3c7c3c" stroke="#000" stroke-width="0.35" />
<polygon points="1478.3,593.8 1523.2,568.6 1523.2,572.3 1479.7,596.9" fill="#20c8d4" stroke="#000" stroke-width="0.35" />
<polygon points="1478.3,593.8 1523.2,568.6 1523.2,569.6 1478.7,594.8" fill="#80f0f0" />
<polygon points="1474.5,600.1 1479.7,602.4 1479.7,619.6 1474.5,617.3" fill="#e89018" stroke="#000" stroke-width="0.35" />
<polygon points="1479.7,602.4 1483.9,600.4 1483.9,615.7 1479.7,619.6" fill="#a85c08" stroke="#000" stroke-width="0.35" />
<polygon points="1440.1,621.9 1445.3,624.2 1445.3,639.7 1440.1,637.4" fill="#e89018" stroke="#000" stroke-width="0.35" />
<polygon points="1445.3,624.2 1449.5,622.1 1449.5,635.8 1445.3,639.7" fill="#a85c08" stroke="#000" stroke-width="0.35" />
<polygon points="1480.8,617.9 1486.5,619.0 1486.5,620.8 1480.8,620.2" fill="#181818" />
<polygon points="1493.4,610.1 1501.4,606.2 1506.0,607.8 1506.0,597.3 1509.7,593.8 1514.2,595.2 1514.2,599.8 1510.8,602.1 1510.8,609.0 1498.2,615.8 1493.4,613.5" fill="#60c050" stroke="#000" stroke-width="0.35" />
<polygon points="1493.4,610.1 1501.4,606.2 1506.0,607.8 1498.2,612.2" fill="#80e070" />
<polygon points="1510.6,589.3 1514.6,587.0 1516.3,591.5 1511.7,593.8" fill="#e88020" stroke="#000" stroke-width="0.35" />
<polygon points="1460.2,588.1 1473.4,594.8 1474.2,638.3 1460.2,642.2" fill="#54545e" stroke="#000" stroke-width="0.35" />
<polygon points="1457.9,587.0 1460.2,588.1 1460.2,642.2 1457.9,640.8" fill="#c0c0c8" stroke="#000" stroke-width="0.35" />
<circle cx="1468.4" cy="606.4" r="0.9" fill="#111"/>
<circle cx="1468.4" cy="615.6" r="0.9" fill="#111"/>
<circle cx="1466.7" cy="623.4" r="0.9" fill="#111"/>
<circle cx="1466.7" cy="628.5" r="0.9" fill="#111"/>
<circle cx="1466.7" cy="633.4" r="0.9" fill="#111"/>
<polygon points="1449.9,588.1 1455.6,585.8 1457.9,593.8 1453.3,597.3 1449.9,593.8" fill="#8c8c80" stroke="#000" stroke-width="0.35" />
<polygon points="1449.1,604.1 1468.2,594.8 1471.3,597.3 1452.4,608.5" fill="#64c040" stroke="#000" stroke-width="0.35" />
<polygon points="1449.1,604.1 1468.2,594.8 1469.1,595.7 1449.9,605.3" fill="#90e068" />
<ellipse cx="1469.7" cy="596.0" rx="1.6" ry="2.2" fill="#3c8828" stroke="#000" stroke-width="0.3" shape-rendering="auto"/>
<polygon points="1439.0,609.9 1444.1,607.4 1447.6,608.7 1447.6,613.3 1442.4,615.8 1439.0,614.2" fill="#58b040" stroke="#000" stroke-width="0.35" />
<polygon points="1440.7,605.3 1445.3,604.1 1445.9,607.0 1441.3,608.2" fill="#f0e040" stroke="#000" stroke-width="0.35" />
<polygon points="1451.0,636.4 1455.6,634.6 1460.4,640.8 1474.2,635.5 1478.7,637.9 1478.7,641.0 1465.9,647.9 1451.0,639.9" fill="#f088e0" stroke="#000" stroke-width="0.35" />
<polygon points="1460.4,640.8 1474.2,635.5 1478.7,637.9 1465.0,643.7" fill="#ffb0f4" />
<polygon points="1397.2,635.3 1459.0,608.5 1459.7,613.3 1399.7,640.6" fill="#141414" stroke="#000" stroke-width="0.35" />
<polygon points="1414.4,630.5 1459.0,610.1 1459.3,611.9 1414.9,632.3" fill="#2ca02c" />
<polygon points="1425.8,619.0 1453.3,607.0 1453.3,609.9 1425.8,621.9" fill="url(#fr)" />
<polygon points="1410.0,628.4 1418.0,624.8 1419.6,627.7 1411.6,631.4" fill="#f0f0b0" stroke="#000" stroke-width="0.35" />
<circle cx="1399.8" cy="637.6" r="0.7" fill="#ddd"/>
<circle cx="1402.3" cy="636.5" r="0.7" fill="#ddd"/>
<circle cx="1404.9" cy="635.4" r="0.7" fill="#ddd"/>
<circle cx="1407.4" cy="634.3" r="0.7" fill="#ddd"/>
<circle cx="1409.9" cy="633.3" r="0.7" fill="#ddd"/>
<polygon points="1402.9,640.8 1408.6,643.1 1408.6,661.4 1402.9,659.1" fill="#e89018" stroke="#000" stroke-width="0.35" />
<polygon points="1408.6,643.1 1413.4,640.8 1413.4,659.1 1408.6,661.4" fill="#a85c08" stroke="#000" stroke-width="0.35" />
<polygon points="1416.7,605.3 1428.1,599.6 1428.1,619.0 1416.7,624.2" fill="#141414" stroke="#000" stroke-width="0.35" />
<polygon points="1418.9,608.7 1421.2,607.8 1421.2,620.2 1418.9,621.1" fill="#c8c8d0" />
<polygon points="1425.2,604.1 1427.0,603.3 1427.0,617.9 1425.2,618.7" fill="#c8c8d0" />
<polygon points="1402.9,623.0 1412.6,619.0 1412.6,628.2 1402.9,632.2" fill="#1c7c30" stroke="#000" stroke-width="0.35" />
<polygon points="1402.3,597.8 1414.4,590.6 1424.9,591.8 1424.9,595.2 1414.4,602.4 1403.5,609.0 1402.3,604.1" fill="#70d860" stroke="#000" stroke-width="0.35" />
<polygon points="1384.6,607.6 1393.7,604.1 1402.3,608.7 1392.6,612.2" fill="#60c050" stroke="#000" stroke-width="0.35" />
<polygon points="1416.2,598.6 1430.4,592.1 1436.4,595.0 1436.4,598.6 1426.0,604.4 1417.8,602.1" fill="#10dce4" stroke="#000" stroke-width="0.35" />
<polygon points="1416.2,598.6 1430.4,592.1 1436.4,595.0 1422.4,601.3" fill="#60f0f4" />
<polygon points="1404.6,608.7 1410.9,607.6 1411.2,613.3 1407.5,615.0 1404.6,613.9" fill="#c898c8" stroke="#000" stroke-width="0.35" />
<polygon points="1391.5,614.7 1402.9,611.9 1411.2,617.9 1411.2,621.6 1400.6,625.0 1391.5,618.4" fill="#10c8d0" stroke="#000" stroke-width="0.35" />
<polygon points="1391.5,614.7 1402.9,611.9 1411.2,617.9 1400.4,620.9" fill="#50e8ec" />
<polygon points="1424.1,633.9 1439.6,630.5 1439.6,632.2 1429.3,637.4" fill="#e020e0" stroke="#000" stroke-width="0.35" />
<circle cx="1508.3" cy="617.9" r="0.8" fill="#111"/>
<circle cx="1516.0" cy="622.1" r="0.8" fill="#111"/>
<circle cx="1484.5" cy="631.6" r="0.8" fill="#111"/>
<circle cx="1499.9" cy="631.6" r="0.8" fill="#111"/>
<circle cx="1491.9" cy="635.8" r="0.8" fill="#111"/>
<polygon points="1333.1,730.5 1538.3,610.8 1538.3,615.8 1333.1,735.5" fill="#54545e" stroke="#000" stroke-width="0.4" />
<polygon points="1004.0,338.0 1331.4,528.0 1331.4,735.0 1004.0,545.0" fill="#000" />
<polygon points="1004.0,338.0 1331.4,528.0 1331.4,540.0 1004.0,350.0" fill="url(#fr)" />
<polygon points="1004.0,530.0 1331.4,720.0 1331.4,735.0 1004.0,545.0" fill="url(#fr)" />
<polygon points="1016.3,357.1 1106.1,409.2 1106.1,589.2 1016.3,537.1" fill="#a8a7b9" stroke="#000" stroke-width="0.5" />
<polygon points="1121.6,418.3 1211.9,470.6 1211.9,650.6 1121.6,598.3" fill="#a8a7b9" stroke="#000" stroke-width="0.5" />
<polygon points="1233.8,483.4 1323.4,535.3 1323.4,715.3 1233.8,663.4" fill="#a8a7b9" stroke="#000" stroke-width="0.5" />
<line x1="1111.3" y1="592.2" x2="1111.3" y2="411.2" stroke="#d89030" stroke-width="1" />
<line x1="1004.0" y1="344.5" x2="1331.4" y2="534.5" stroke="#e8a030" stroke-width="0.9" />
<polygon points="1331.4,528.0 1339.6,523.2 1339.6,730.2 1331.4,735.0" fill="#000" />
<polygon points="1530.1,412.1 1536.6,408.3 1536.6,615.3 1530.1,619.1" fill="#000" />
<polygon points="1524.5,516.4 1531.0,512.6 1531.0,618.6 1524.5,622.4" fill="#000" />
<polygon points="1331.4,528.0 1536.6,408.3 1536.6,417.3 1331.4,537.0" fill="url(#fr)" />
<polygon points="1339.6,619.7 1530.1,508.6 1530.1,514.1 1339.6,625.2" fill="url(#fr)" />
<polygon points="1339.9,531.8 1530.1,420.8 1530.1,509.1 1339.9,620.1" fill="#5c4220" stroke="#000" stroke-width="0.5" />
<line x1="1331.4" y1="533.0" x2="1536.6" y2="413.3" stroke="#e8a030" stroke-width="0.8" />
<polygon points="1004.0,338.0 1209.2,218.3 1536.6,408.3 1331.4,528.0" fill="url(#fr)" stroke="#000" stroke-width="0.6" />
<polygon points="1019.4,337.4 1208.6,227.0 1305.2,283.1 1116.0,393.5" fill="#e6e6e6" stroke="#000" stroke-width="0.5" />
<polygon points="1124.3,398.3 1313.5,287.9 1410.8,344.3 1221.5,454.7" fill="#e6e6e6" stroke="#000" stroke-width="0.5" />
<polygon points="1236.2,463.2 1425.5,352.9 1521.5,408.6 1332.3,519.0" fill="#e6e6e6" stroke="#000" stroke-width="0.5" />
<line x1="1220.7" y1="463.8" x2="1425.9" y2="344.1" stroke="#e8a030" stroke-width="0.8" />
<polygon points="1091.2,487.2 1098.9,479.0 1103.8,482.3 1103.8,485.5 1098.9,488.8 1096.6,489.5 1096.6,504.3 1099.5,503.2 1103.8,506.3 1103.8,508.9 1100.0,511.8 1096.6,510.1 1091.2,506.6" fill="#2c8030" stroke="#000" stroke-width="0.9" />
<polygon points="1092.6,486.8 1098.9,480.2 1102.8,482.5 1097.0,488.2" fill="#44b04c" />
<polygon points="1097.4,488.6 1103.0,482.8 1103.5,485.3 1099.0,488.4" fill="#1c5020" />
<polygon points="1092.0,488.2 1093.8,488.9 1093.8,507.5 1092.0,506.3" fill="#3aa044" />
<polygon points="1097.6,504.6 1099.5,504.0 1102.8,506.5 1099.2,508.3" fill="#3aa044" />
<polygon points="1097.2,509.5 1103.2,507.2 1103.4,508.6 1100.0,511.0" fill="#1c5020" />
<polygon points="1117.8,502.5 1125.5,494.3 1130.4,497.6 1130.4,500.8 1125.5,504.1 1123.2,504.8 1123.2,519.6 1126.1,518.5 1130.4,521.6 1130.4,524.2 1126.6,527.1 1123.2,525.4 1117.8,521.9" fill="#2c8030" stroke="#000" stroke-width="0.9" />
<polygon points="1119.2,502.1 1125.5,495.5 1129.4,497.8 1123.6,503.5" fill="#44b04c" />
<polygon points="1124.0,503.9 1129.6,498.1 1130.1,500.6 1125.6,503.7" fill="#1c5020" />
<polygon points="1118.6,503.5 1120.4,504.2 1120.4,522.8 1118.6,521.6" fill="#3aa044" />
<polygon points="1124.2,519.9 1126.1,519.3 1129.4,521.8 1125.8,523.6" fill="#3aa044" />
<polygon points="1123.8,524.8 1129.8,522.5 1130.0,523.9 1126.6,526.3" fill="#1c5020" />
<polygon points="1308.6,612.3 1316.3,604.1 1321.2,607.4 1321.2,610.6 1316.3,613.9 1314.0,614.6 1314.0,629.4 1316.9,628.3 1321.2,631.4 1321.2,634.0 1317.4,636.9 1314.0,635.2 1308.6,631.7" fill="#2c8030" stroke="#000" stroke-width="0.9" />
<polygon points="1310.0,611.9 1316.3,605.3 1320.2,607.6 1314.4,613.3" fill="#44b04c" />
<polygon points="1314.8,613.7 1320.4,607.9 1320.9,610.4 1316.4,613.5" fill="#1c5020" />
<polygon points="1309.4,613.3 1311.2,614.0 1311.2,632.6 1309.4,631.4" fill="#3aa044" />
<polygon points="1315.0,629.7 1316.9,629.1 1320.2,631.6 1316.6,633.4" fill="#3aa044" />
<polygon points="1314.6,634.6 1320.6,632.3 1320.8,633.7 1317.4,636.1" fill="#1c5020" />
<path d="M1007.0 366.0 l4 2 v9 l-4 -2 z" fill="none" stroke="#ddd" stroke-width="0.6" stroke-dasharray="1 1"/>
<path d="M1216.0 485.0 l4 2 v9 l-4 -2 z" fill="none" stroke="#ddd" stroke-width="0.6" stroke-dasharray="1 1"/>
<path d="M1226.0 491.0 l4 2 v9 l-4 -2 z" fill="none" stroke="#ddd" stroke-width="0.6" stroke-dasharray="1 1"/>
<path d="M1216.0 635.0 l4 2 v9 l-4 -2 z" fill="none" stroke="#ddd" stroke-width="0.6" stroke-dasharray="1 1"/>
<path d="M1226.0 641.0 l4 2 v9 l-4 -2 z" fill="none" stroke="#ddd" stroke-width="0.6" stroke-dasharray="1 1"/>
<defs><linearGradient id="wm" x1="0" y1="0" x2="0" y2="1"><stop offset="0" stop-color="#f07020"/><stop offset="1" stop-color="#f8a020"/></linearGradient></defs>
<g fill="url(#wm)" shape-rendering="auto"><path d="M891.300 517.500l2.300 -1v21.800h-2.300zM894.800 513l3.100 -1.500v25.200h-3.100zM899.100 509.500l3.500 -2v27.700h-3.500z"/><path d="M936.200 517.500l-2.300 -1v21.800h2.300zM932.400 513l-3.100 -1.500v25.200h3.100zM928.100 509.500l-3.500 -2v27.700h3.500z"/><path d="M911.500 509.500c-9 3.500 -10.500 19 1 27c-4 -8 -4.500 -18 -1 -27z"/><path d="M919 518.500c5.500 5 4 14.500 -5.500 18c5.500 -5 6 -11 5.500 -18z"/><path d="M908 514c3 -3 7 -3 9 1l-2.500 1.500c-1.500 -2 -4 -2 -5.500 0z"/><path d="M890.800 537.500h21.500l1.500 1l1.500 -1h21.500v2h-21l-2 1.300l-2 -1.300h-21z"/></g>
<text x="947.500" y="529.500" font-family="Liberation Sans,Noto Sans CJK SC,sans-serif" font-size="17.200" font-weight="500" fill="#f08224" textLength="81.500" shape-rendering="auto">智造资料网</text>
<text x="947.500" y="538" font-family="Liberation Sans,sans-serif" font-size="4.600" font-weight="bold" font-style="italic" fill="#f08224" textLength="81.500" lengthAdjust="spacingAndGlyphs">INTELLIGENT MANUFACTURING DATA</text></svg>
</div>
<div id="status1" class="abs"></div><div id="status2" class="abs"></div>
<div class="abs" style="left:4px;top:1020px;width:1912px;height:1px;background:#a4a6b0"></div>
<div id="taskbar" class="abs"><div class="abs" style="left:48px;top:0;width:344px;height:8px;background:#f0f0f0"></div><div class="abs" style="left:588px;top:0;width:49px;height:8px;background:#4c4c4c"></div><div class="abs" style="left:1815px;top:3px;width:40px;height:5px;overflow:hidden;color:#fff;font-size:12px;line-height:12px;letter-spacing:0.3px">14:09</div><div class="abs" style="left:1915px;top:0;width:1px;height:8px;background:#8a8a8a"></div></div>
<div class="st" style="left:1601px;top:1003px">绝对视图</div>
<div class="st" style="left:1668px;top:1003px;font-weight:bold">LAYER0</div>
<div class="abs" style="left:1657px;top:1004px;width:3px;height:14px;border-left:2px dotted #a4a8b8"></div>
<div class="abs" style="left:1762px;top:1005px;width:32px;height:12px;background:#44618a"></div>
<div class="abs" style="left:1805px;top:1005px;width:32px;height:12px;background:#44618a"></div>
<div class="abs" style="left:1848px;top:1005px;width:32px;height:12px;background:#44618a"></div>
<div class="vsep" style="left:1592px;top:1004px;height:14px"></div>
<div class="vsep" style="left:1726px;top:1004px;height:14px"></div>
<div class="vsep" style="left:1757px;top:1004px;height:14px"></div>
<div class="vsep" style="left:1800px;top:1004px;height:14px"></div>
<div class="vsep" style="left:1843px;top:1004px;height:14px"></div>
<div class="vsep" style="left:1886px;top:1004px;height:14px"></div>
<div class="st" style="left:1141px;top:1024px">拴牢</div>
<div class="st" style="left:1589px;top:1024px">单位: 毫米</div>
<div class="st" style="left:1663px;top:1024px;letter-spacing:0.42px"><span style="color:#e8141c">X =-5799.306</span> Y = 4235.837 Z = 0000.000</div>
<svg class="abs" style="left:0;top:0" width="1920" height="1048" viewBox="0 0 1920 1048"><defs>
<linearGradient id="gfr" x1="0" y1="0" x2="1" y2="1"><stop offset="0" stop-color="#fff"/><stop offset="1" stop-color="#b8ccf0"/></linearGradient>
<linearGradient id="gpage" x1="0" y1="0" x2="1" y2="1"><stop offset="0" stop-color="#fff"/><stop offset="1" stop-color="#a8c0f0"/></linearGradient>
<linearGradient id="gblue" x1="0" y1="0" x2="1" y2="0"><stop offset="0" stop-color="#88a8e8"/><stop offset="0.35" stop-color="#5078c8"/><stop offset="1" stop-color="#203c80"/></linearGradient>
<linearGradient id="glblue" x1="0" y1="0" x2="1" y2="0"><stop offset="0" stop-color="#e4ecfc"/><stop offset="1" stop-color="#a8b8d8"/></linearGradient>
<linearGradient id="gdblue" x1="0" y1="0" x2="1" y2="0"><stop offset="0" stop-color="#6080c8"/><stop offset="1" stop-color="#102050"/></linearGradient>
<linearGradient id="ggrey" x1="0" y1="0" x2="1" y2="0"><stop offset="0" stop-color="#e8e8f0"/><stop offset="1" stop-color="#707080"/></linearGradient>
<radialGradient id="gsm" cx="0.4" cy="0.35" r="0.7"><stop offset="0" stop-color="#fff8a0"/><stop offset="1" stop-color="#e8b820"/></radialGradient>
<radialGradient id="gglobe" cx="0.4" cy="0.35" r="0.7"><stop offset="0" stop-color="#4060ff"/><stop offset="1" stop-color="#0818a0"/></radialGradient>
</defs><g transform="translate(10.0,11.0)" ><rect x="-8" y="-8" width="16" height="16" fill="#6cbc44"/><path d="M-4.500 -2.500l3 8l5 -11" fill="none" stroke="#fff" stroke-width="2.600" stroke-linejoin="round"/><circle cx="-4.500" cy="-5.500" r="1.300" fill="#fff"/></g>
<rect x="20" y="5" width="1" height="14" fill="#999"/>
<g transform="translate(39.5,12.0)" ><g transform="translate(0,0) scale(1.0)"><path d="M-6 -8h8l4 4v12h-12z" fill="url(#gpage)" stroke="#111" stroke-width="1.2"/><path d="M2 -8v4h4" fill="#fff" stroke="#111" stroke-width="0.800"/></g></g>
<g transform="translate(64.0,13.0)" ><g transform="translate(-1,1) scale(1.0)"><path d="M-8 -4h5l1.500 1.500h7.500v9h-14z" fill="#e8c050" stroke="#a07818" stroke-width="0.600"/><path d="M-8 6.500l2.500 -7h14l-2.500 7z" fill="#f8dc80" stroke="#a07818" stroke-width="0.600"/></g><path d="M-3 -2c1 -6 7 -6 8 -3l2.500 -1.500l-1 7l-6 -2l2.500 -1.500c-1 -2 -4 -1.500 -4.500 1.500z" fill="#28b028" stroke="#106010" stroke-width="0.500"/></g>
<g transform="translate(88.0,12.0)" ><g transform="translate(-3,-4) scale(0.6)"><path d="M-8 -4h5l1.500 1.500h7.500v9h-14z" fill="#e8c050" stroke="#a07818" stroke-width="0.600"/><path d="M-8 6.500l2.500 -7h14l-2.500 7z" fill="#f8dc80" stroke="#a07818" stroke-width="0.600"/></g><g transform="translate(-3,5) scale(0.6)"><path d="M-8 -4h5l1.500 1.500h7.500v9h-14z" fill="#e8c050" stroke="#a07818" stroke-width="0.600"/><path d="M-8 6.500l2.500 -7h14l-2.500 7z" fill="#f8dc80" stroke="#a07818" stroke-width="0.600"/></g><path d="M-1 -7h7v14h-7" fill="none" stroke="#58d858" stroke-width="1"/><g transform="translate(4,1) scale(0.65)"><path d="M-6 -8h8l4 4v12h-12z" fill="url(#gpage)" stroke="#111" stroke-width="1"/><path d="M2 -8v4h4" fill="#fff" stroke="#111" stroke-width="0.800"/></g></g>
<g transform="translate(111.0,12.0)" ><g transform="translate(0,0) scale(1.0)"><rect x="-8" y="-8" width="16" height="16" rx="1" fill="#4468b0" stroke="#223c78" stroke-width="0.800"/><rect x="-5.500" y="-7.500" width="11" height="8.500" fill="#f4f4f4"/><rect x="-5.500" y="-7.500" width="11" height="1.800" fill="#e03828"/><path d="M-4.500 -4h9M-4.500 -2.500h9M-4.500 -1h9" stroke="#aaa" stroke-width="0.600"/><rect x="-4.500" y="3" width="9" height="5" fill="#c8c8c8"/><rect x="-3.500" y="3.500" width="2.500" height="4" fill="#334"/></g></g>
<g transform="translate(135.5,12.0)" ><g transform="translate(3,-3) scale(0.68)"><rect x="-8" y="-8" width="16" height="16" rx="1" fill="#4468b0" stroke="#223c78" stroke-width="0.800"/><rect x="-5.500" y="-7.500" width="11" height="8.500" fill="#f4f4f4"/><rect x="-5.500" y="-7.500" width="11" height="1.800" fill="#e03828"/><path d="M-4.500 -4h9M-4.500 -2.500h9M-4.500 -1h9" stroke="#aaa" stroke-width="0.600"/><rect x="-4.500" y="3" width="9" height="5" fill="#c8c8c8"/><rect x="-3.500" y="3.500" width="2.500" height="4" fill="#334"/></g><g transform="translate(-3,3) scale(0.68)"><rect x="-8" y="-8" width="16" height="16" rx="1" fill="#4468b0" stroke="#223c78" stroke-width="0.800"/><rect x="-5.500" y="-7.500" width="11" height="8.500" fill="#f4f4f4"/><rect x="-5.500" y="-7.500" width="11" height="1.800" fill="#e03828"/><path d="M-4.500 -4h9M-4.500 -2.500h9M-4.500 -1h9" stroke="#aaa" stroke-width="0.600"/><rect x="-4.500" y="3" width="9" height="5" fill="#c8c8c8"/><rect x="-3.500" y="3.500" width="2.500" height="4" fill="#334"/></g></g>
<g transform="translate(157.0,12.0)" ><g transform="translate(-3,-4) scale(0.68)"><rect x="-8" y="-8" width="16" height="16" rx="1" fill="#4468b0" stroke="#223c78" stroke-width="0.800"/><rect x="-5.500" y="-7.500" width="11" height="8.500" fill="#f4f4f4"/><rect x="-5.500" y="-7.500" width="11" height="1.800" fill="#e03828"/><path d="M-4.500 -4h9M-4.500 -2.500h9M-4.500 -1h9" stroke="#aaa" stroke-width="0.600"/><rect x="-4.500" y="3" width="9" height="5" fill="#c8c8c8"/><rect x="-3.500" y="3.500" width="2.500" height="4" fill="#334"/></g><path d="M1 1l4 -2l4 2v5l-4 2l-4 -2z" fill="#888" stroke="#333" stroke-width="0.500"/><path d="M1 1l4 2l4 -2M5 3v5" stroke="#333" stroke-width="0.500" fill="none"/><path d="M3 -8c4 -2 7 1 5 4l1.500 1l-4.500 1l-.5 -4.500l1.500 1c1 -1.500 0 -2.500 -3 -2.500z" fill="#30c030" stroke="#106010" stroke-width="0.400"/></g>
<g transform="translate(184.0,12.0)" ><rect x="-5" y="-8" width="10" height="8" fill="#b8d0f8" stroke="#446" stroke-width="0.800"/><path d="M0 -7.500l-3.500 4h2.200v2.500h2.600v-2.500h2.200z" fill="#20c020"/><path d="M-8.500 0h17v6h-17z" fill="#e8e8e8" stroke="#666" stroke-width="0.700"/><rect x="-6.500" y="4" width="13" height="4.500" fill="#fafafa" stroke="#777" stroke-width="0.600"/><path d="M-8.500 2.500h17" stroke="#999" stroke-width="0.600"/></g>
<g transform="translate(207.0,12.0)" ><circle cx="0" cy="0" r="9.500" fill="#68a838" stroke="#3c7018" stroke-width="1"/><g transform="translate(0,0) scale(1)"><path d="M2 2l6 6" stroke="#888" stroke-width="3" stroke-linecap="round"/><path d="M2 2l6 6" stroke="#d8d8d8" stroke-width="1.4" stroke-linecap="round"/><circle cx="-1.500" cy="-1.500" r="5.200" fill="#b8d8f4" stroke="#8890a0" stroke-width="1.6"/><path d="M-4.500 -2.500a3.500 3.500 0 0 1 3 -2.800" stroke="#fff" stroke-width="1" fill="none"/></g></g>
<g transform="translate(232.0,12.0)" ><g transform=""><ellipse cx="1" cy="8" rx="7" ry="1.600" fill="#889" opacity="0.400"/><path d="M-8 -2l7 -7v4.500c7 0 9 5 6 11c-1 -4 -3 -5.500 -6 -5.500v4z" fill="#a8a8a8" stroke="#808080" stroke-width="0.600"/></g></g>
<g transform="translate(254.5,12.0)" ><g transform="scale(-1,1)"><ellipse cx="1" cy="8" rx="7" ry="1.600" fill="#889" opacity="0.400"/><path d="M-8 -2l7 -7v4.500c7 0 9 5 6 11c-1 -4 -3 -5.500 -6 -5.500v4z" fill="#a8a8a8" stroke="#808080" stroke-width="0.600"/></g></g>
<g transform="translate(279.0,12.0)" ><g transform="translate(2,0)"><g transform=""><ellipse cx="1" cy="8" rx="7" ry="1.600" fill="#889" opacity="0.400"/><path d="M-8 -2l7 -7v4.500c7 0 9 5 6 11c-1 -4 -3 -5.500 -6 -5.500v4z" fill="#5088d0" stroke="#2858a0" stroke-width="0.600"/></g></g><path d="M-8 1h5l-1.800 4l1.800 4.500h-5l1.800 -4.500z" fill="#c8a850" stroke="#705010" stroke-width="0.700"/></g>
<path d="M294 9h9" stroke="#000" stroke-width="1.200"/><path d="M295.500 12h6l-3 3.500z" fill="#000"/>
<rect x="312" y="6" width="1" height="13" fill="#999"/>
<path d="M1799.500 10.500h10" stroke="#000" stroke-width="1"/>
<path d="M1844.500 8.500h7v7h-7zM1846.500 8.500v-2h7v7h-2" fill="none" stroke="#000" stroke-width="1"/>
<path d="M1890 5l10 10M1900 5l-10 10" stroke="#000" stroke-width="1.100"/>
<path d="M1870 36.500h9" stroke="#8a8a8a" stroke-width="1"/><path d="M1888.500 31.500h6v5h-6zM1890.500 31.500v-2h6v5h-2" fill="none" stroke="#8a8a8a" stroke-width="1"/><path d="M1906 28l8 8M1914 28l-8 8" stroke="#8a8a8a" stroke-width="1"/>
<g transform="translate(33.0,79.0)" ><ellipse cx="0" cy="4.500" rx="7.500" ry="4.500" fill="#c8a070" stroke="#604020" stroke-width="0.600"/><circle cx="-3.500" cy="5" r="1.600" fill="#2050e0"/><circle cx="0.500" cy="6.500" r="1.600" fill="#20b030"/><circle cx="3" cy="3" r="1.600" fill="#e02020"/><path d="M-7.500 -7h9l3 2h-9zM-7.500 -4.500h9l3 2h-9z" fill="#7080e0" stroke="#334" stroke-width="0.400"/><path d="M-7.500 -2h9l3 2h-9z" fill="#e8e8e8" stroke="#334" stroke-width="0.400"/><path d="M8.500 -8.500l-6.500 10" stroke="#a05820" stroke-width="1.600"/><path d="M2 1.500l-1.500 3" stroke="#333" stroke-width="1.800"/></g>
<g transform="translate(59.0,79.0)" ><g transform="translate(2,-3) scale(0.75)"><path d="M-6 -8h8l4 4v12h-12z" fill="url(#gpage)" stroke="#111" stroke-width="0.9"/><path d="M2 -8v4h4" fill="#fff" stroke="#111" stroke-width="0.800"/></g><rect x="-7" y="-4" width="8" height="8" fill="#a8c0f0" stroke="#223" stroke-width="0.800"/><g transform="translate(0,5) scale(1.0)"><path d="M-8.5 1Q0 -7.5 8.5 1Q0 4.5 -8.5 1z" fill="#b8c0dc" stroke="#4a5278" stroke-width="0.6"/><circle cx="0" cy="-0.6" r="3.3" fill="#4868a0"/><circle cx="0" cy="-0.6" r="1.4" fill="#1c2c50"/><path d="M-8.5 0.5Q0 -8.5 8.5 0.5" fill="none" stroke="#2c3458" stroke-width="2"/><path d="M-6 -4l-1.5 -2M-3 -5.5l-.8 -2.3M0 -6v-2.4M3 -5.5l.8 -2.3M6 -4l1.5 -2" stroke="#3c4668" stroke-width="0.7"/></g></g>
<g transform="translate(85.0,79.0)" ><g transform="translate(0,-3.5) scale(1.12)"><path d="M-8.5 1Q0 -7.5 8.5 1Q0 4.5 -8.5 1z" fill="#b8c0dc" stroke="#4a5278" stroke-width="0.6"/><circle cx="0" cy="-0.6" r="3.3" fill="#4868a0"/><circle cx="0" cy="-0.6" r="1.4" fill="#1c2c50"/><path d="M-8.5 0.5Q0 -8.5 8.5 0.5" fill="none" stroke="#2c3458" stroke-width="2"/><path d="M-6 -4l-1.5 -2M-3 -5.5l-.8 -2.3M0 -6v-2.4M3 -5.5l.8 -2.3M6 -4l1.5 -2" stroke="#3c4668" stroke-width="0.7"/></g><path d="M-8.3 5.5h7.6M-4.5 1.7000000000000002v7.6" stroke="#58d828" stroke-width="2.8"/><path d="M2.5 3.5q4 -3 5 1q0 3 -4 4" fill="none" stroke="#3868c8" stroke-width="1.4"/><path d="M2.0 5.0l0 -3.5l3.5 2z" fill="#3868c8"/></g>
<g transform="translate(111.0,79.0)" ><g transform="translate(0,-3.5) scale(1.12)"><path d="M-8.5 1Q0 -7.5 8.5 1Q0 4.5 -8.5 1z" fill="#b8c0dc" stroke="#4a5278" stroke-width="0.6"/><circle cx="0" cy="-0.6" r="3.3" fill="#4868a0"/><circle cx="0" cy="-0.6" r="1.4" fill="#1c2c50"/><path d="M-8.5 0.5Q0 -8.5 8.5 0.5" fill="none" stroke="#2c3458" stroke-width="2"/><path d="M-6 -4l-1.5 -2M-3 -5.5l-.8 -2.3M0 -6v-2.4M3 -5.5l.8 -2.3M6 -4l1.5 -2" stroke="#3c4668" stroke-width="0.7"/></g><path d="M-8.3 5.5h7.6" stroke="#e8e000" stroke-width="2.8"/><path d="M2.5 3.5q4 -3 5 1q0 3 -4 4" fill="none" stroke="#3868c8" stroke-width="1.4"/><path d="M2.0 5.0l0 -3.5l3.5 2z" fill="#3868c8"/></g>
<g transform="translate(137.0,79.0)" ><g transform="translate(0,-4) scale(1.08)"><path d="M-8.5 1Q0 -7.5 8.5 1Q0 4.5 -8.5 1z" fill="#b8c0dc" stroke="#4a5278" stroke-width="0.6"/><circle cx="0" cy="-0.6" r="3.3" fill="#4868a0"/><circle cx="0" cy="-0.6" r="1.4" fill="#1c2c50"/><path d="M-8.5 0.5Q0 -8.5 8.5 0.5" fill="none" stroke="#2c3458" stroke-width="2"/><path d="M-6 -4l-1.5 -2M-3 -5.5l-.8 -2.3M0 -6v-2.4M3 -5.5l.8 -2.3M6 -4l1.5 -2" stroke="#3c4668" stroke-width="0.7"/></g><rect x="-7.5" y="-4" width="6" height="13" rx="2.5" fill="#111"/><circle cx="-4.5" cy="-1" r="2" fill="#f0c000"/><circle cx="-4.5" cy="5.5" r="2" fill="#20e020"/><rect x="1.5" y="-4" width="6" height="13" rx="2.5" fill="#111"/><circle cx="4.5" cy="-1" r="2" fill="#f01010"/><circle cx="4.5" cy="5.5" r="2" fill="#f0c000"/></g>
<g transform="translate(163.0,79.0)" ><g transform="translate(0,-4) scale(1.08)"><path d="M-8.5 1Q0 -7.5 8.5 1Q0 4.5 -8.5 1z" fill="#b8c0dc" stroke="#4a5278" stroke-width="0.6"/><circle cx="0" cy="-0.6" r="3.3" fill="#4868a0"/><circle cx="0" cy="-0.6" r="1.4" fill="#1c2c50"/><path d="M-8.5 0.5Q0 -8.5 8.5 0.5" fill="none" stroke="#2c3458" stroke-width="2"/><path d="M-6 -4l-1.5 -2M-3 -5.5l-.8 -2.3M0 -6v-2.4M3 -5.5l.8 -2.3M6 -4l1.5 -2" stroke="#3c4668" stroke-width="0.7"/></g><g transform="translate(0,3) scale(1.05)"><path d="M-6 0a6 5.5 0 0 1 10 -4l2 -2v6h-6l2 -2a3.5 3 0 0 0 -5.500 2z" fill="#58c030" stroke="#2a6010" stroke-width="0.4"/><path d="M6 1a6 5.500 0 0 1 -10 4l-2 2v-6h6l-2 2a3.5 3 0 0 0 5.500 -2z" fill="#e8d820" stroke="#807000" stroke-width="0.4"/></g></g>
<g transform="translate(189.0,79.0)" ><g transform="translate(0,-3.5) scale(1.12)"><path d="M-8.5 1Q0 -7.5 8.5 1Q0 4.5 -8.5 1z" fill="#b8c0dc" stroke="#4a5278" stroke-width="0.6"/><circle cx="0" cy="-0.6" r="3.3" fill="#4868a0"/><circle cx="0" cy="-0.6" r="1.4" fill="#1c2c50"/><path d="M-8.5 0.5Q0 -8.5 8.5 0.5" fill="none" stroke="#2c3458" stroke-width="2"/><path d="M-6 -4l-1.5 -2M-3 -5.5l-.8 -2.3M0 -6v-2.4M3 -5.5l.8 -2.3M6 -4l1.5 -2" stroke="#3c4668" stroke-width="0.7"/></g><path d="M-8.3 4.5h6.6M-5 1.2000000000000002v6.6" stroke="#58d828" stroke-width="2.5"/><path d="M-3 9.500l5 -7" stroke="#222" stroke-width="1"/><path d="M1.5 8h7.0" stroke="#e8e000" stroke-width="2.5"/></g>
<g transform="translate(215.0,79.0)" ><g transform="translate(0,-3.5) scale(1.12)"><path d="M-8.5 1Q0 -7.5 8.5 1Q0 4.5 -8.5 1z" fill="#b8c0dc" stroke="#4a5278" stroke-width="0.6"/><circle cx="0" cy="-0.6" r="3.3" fill="#4868a0"/><circle cx="0" cy="-0.6" r="1.4" fill="#1c2c50"/><path d="M-8.5 0.5Q0 -8.5 8.5 0.5" fill="none" stroke="#2c3458" stroke-width="2"/><path d="M-6 -4l-1.5 -2M-3 -5.5l-.8 -2.3M0 -6v-2.4M3 -5.5l.8 -2.3M6 -4l1.5 -2" stroke="#3c4668" stroke-width="0.7"/></g><path d="M-3.5 5.5h9.0M1 1.0v9.0" stroke="#58d828" stroke-width="3"/></g>
<g transform="translate(241.0,79.0)" ><g transform="translate(0,-3.5) scale(1.12)"><path d="M-8.5 1Q0 -7.5 8.5 1Q0 4.5 -8.5 1z" fill="#b8c0dc" stroke="#4a5278" stroke-width="0.6"/><circle cx="0" cy="-0.6" r="3.3" fill="#4868a0"/><circle cx="0" cy="-0.6" r="1.4" fill="#1c2c50"/><path d="M-8.5 0.5Q0 -8.5 8.5 0.5" fill="none" stroke="#2c3458" stroke-width="2"/><path d="M-6 -4l-1.5 -2M-3 -5.5l-.8 -2.3M0 -6v-2.4M3 -5.5l.8 -2.3M6 -4l1.5 -2" stroke="#3c4668" stroke-width="0.7"/></g><path d="M-2.8 5h9.6" stroke="#e8e000" stroke-width="3"/></g>
<g transform="translate(283.0,79.0)" ><path d="M-7 -1a7 6 0 0 1 11 -4.500l2 -2.500v7h-6.500l2 -2.200a4 3.400 0 0 0 -5.500 2.200z" fill="#6098e0" stroke="#3060a8" stroke-width="0.500"/><path d="M7 2a7 6 0 0 1 -11 4.500l-2 2.500v-7h6.500l-2 2.200a4 3.400 0 0 0 5.500 -2.200z" fill="#6098e0" stroke="#3060a8" stroke-width="0.500"/></g>
<g transform="translate(310.0,79.0)" ><path d="M-5.2 -6.5v13.0a5.2 2.300 0 0 0 10.4 0v-13.0" fill="none" stroke="#222" stroke-width="0.9"/><ellipse cx="0" cy="-6.5" rx="5.2" ry="2.300" fill="none" stroke="#222" stroke-width="0.9"/><path d="M-5.200 6.500a5.200 2.300 0 0 1 10.400 0" fill="none" stroke="#222" stroke-width="0.6"/></g>
<g transform="translate(336.0,79.0)" ><path d="M-5.2 -6.5v13.0a5.2 2.300 0 0 0 10.4 0v-13.0" fill="none" stroke="#222" stroke-width="0.9"/><ellipse cx="0" cy="-6.5" rx="5.2" ry="2.300" fill="none" stroke="#222" stroke-width="0.9"/><path d="M-5.200 6.500a5.200 2.300 0 0 1 10.400 0" fill="none" stroke="#222" stroke-width="0.6"/></g>
<g transform="translate(362.0,79.0)" ><path d="M-5.2 -6.5v13.0a5.2 2.300 0 0 0 10.4 0v-13.0" fill="none" stroke="#222" stroke-width="0.9"/><ellipse cx="0" cy="-6.5" rx="5.2" ry="2.300" fill="none" stroke="#222" stroke-width="0.9"/><path d="M-5.200 6.500a5.200 2.300 0 0 1 10.400 0" fill="none" stroke="#222" stroke-width="0.6"/></g>
<g transform="translate(388.0,79.0)" ><ellipse cx="2" cy="8.5" rx="7" ry="1.6" fill="#50506a" opacity="0.45"/><path d="M-5.2 -6.5v13.0a5.2 2.300 0 0 0 10.4 0v-13.0" fill="url(#gblue)" stroke="#20d8f0" stroke-width="1.1"/><ellipse cx="0" cy="-6.5" rx="5.2" ry="2.300" fill="#80b0f0" stroke="#20d8f0" stroke-width="1.1"/></g>
<rect x="401.500" y="66.500" width="24" height="24" fill="#ffe478" stroke="#e8c458" stroke-width="1"/>
<g transform="translate(413.5,79.0)" ><ellipse cx="2" cy="8.5" rx="7" ry="1.6" fill="#50506a" opacity="0.45"/><path d="M-5.2 -6.5v13.0a5.2 2.300 0 0 0 10.4 0v-13.0" fill="url(#gblue)" stroke="#182848" stroke-width="0.9"/><ellipse cx="0" cy="-6.5" rx="5.2" ry="2.300" fill="#6890d8" stroke="#182848" stroke-width="0.9"/></g>
<g transform="translate(440.0,79.0)" ><ellipse cx="2" cy="8.5" rx="7" ry="1.6" fill="#50506a" opacity="0.45"/><path d="M-5.2 -6.5v13.0a5.2 2.300 0 0 0 10.4 0v-13.0" fill="#dce8f8" stroke="#40e0f0" stroke-width="1.1"/><ellipse cx="0" cy="-6.5" rx="5.2" ry="2.300" fill="#e8f0fc" stroke="#40e0f0" stroke-width="1.1"/></g>
<g transform="translate(466.0,79.0)" ><ellipse cx="2" cy="8.5" rx="7" ry="1.6" fill="#50506a" opacity="0.45"/><path d="M-5.2 -6.5v13.0a5.2 2.300 0 0 0 10.4 0v-13.0" fill="url(#glblue)" stroke="#606880" stroke-width="0.8"/><ellipse cx="0" cy="-6.5" rx="5.2" ry="2.300" fill="#e8f0fc" stroke="#606880" stroke-width="0.8"/></g>
<g transform="translate(492.0,79.0)" ><path d="M-5.2 -6.5v13.0a5.2 2.300 0 0 0 10.4 0v-13.0" fill="#e0e0e0" stroke="#222" stroke-width="0.9"/><ellipse cx="0" cy="-6.5" rx="5.2" ry="2.300" fill="none" stroke="#222" stroke-width="0.9"/><path d="M-5 -6l4 13M-2 -4.500l5 12M2 -4.500l-5 12M5 -6l-3 14M-5 6l4 -11" stroke="#222" stroke-width="0.600" fill="none"/></g>
<g transform="translate(518.0,79.0)" ><g transform="translate(-4,-2) scale(0.8)"><path d="M-5.2 -6.5v13.0a5.2 2.300 0 0 0 10.4 0v-13.0" fill="#f0f0f0" stroke="#555" stroke-width="0.9"/><ellipse cx="0" cy="-6.5" rx="5.2" ry="2.300" fill="none" stroke="#555" stroke-width="0.9"/></g><g transform="translate(4,2.500) scale(0.8)"><path d="M-5.2 -6.5v13.0a5.2 2.300 0 0 0 10.4 0v-13.0" fill="url(#gblue)" stroke="#182848" stroke-width="0.9"/><ellipse cx="0" cy="-6.5" rx="5.2" ry="2.300" fill="#6890d8" stroke="#182848" stroke-width="0.9"/></g><path d="M1 -8.500c3 -1.500 5 0 5 2l1.500 .5l-3 2.500l-2 -3.500l1.500 .3c0 -1 -1 -1.500 -3 -1.800z" fill="#30c030"/><path d="M-2 9c-3 .5 -5 -1 -5 -3l-1.500 -.5l3 -2.500l2 3.500l-1.500 -.3c0 1 1 1.500 3 1.800z" fill="#30c030"/></g>
<g transform="translate(544.0,79.0)" ><g transform="translate(-2.500,-1) scale(0.9)"><path d="M-5.2 -6.5v13.0a5.2 2.300 0 0 0 10.4 0v-13.0" fill="url(#gblue)" stroke="#182848" stroke-width="0.9"/><ellipse cx="0" cy="-6.5" rx="5.2" ry="2.300" fill="#6890d8" stroke="#182848" stroke-width="0.9"/></g><g transform="translate(4,3) scale(0.6)"><path d="M-7 -1a7 6 0 0 1 11 -4.500l2 -2.500v7h-6.500l2 -2.200a4 3.400 0 0 0 -5.500 2.200z" fill="#6098e0" stroke="#3060a8" stroke-width="0.500"/><path d="M7 2a7 6 0 0 1 -11 4.500l-2 2.500v-7h6.500l-2 2.200a4 3.400 0 0 0 5.500 -2.200z" fill="#6098e0" stroke="#3060a8" stroke-width="0.500"/></g></g>
<g transform="translate(570.5,79.0)" ><rect x="-8" y="-7" width="15" height="12" fill="#5878a8" stroke="#889" stroke-width="1"/><path d="M-7 7l9 -9" stroke="#4080e0" stroke-width="2.600"/><path d="M8 8l-9 -9" stroke="#c8c8c8" stroke-width="2.400"/><circle cx="-2" cy="-2" r="2.500" fill="#d8d8d8"/><path d="M5 -7l3 3l-2 2l-3 -3z" fill="#e8e8e8"/></g>
<g transform="translate(612.0,79.0)" ><g transform="translate(-4,-4)"><path d="M-4 -2l4 -2l4 2v5l-4 2l-4 -2z" fill="#a0a0a0" stroke="#222" stroke-width="0.7"/><path d="M-4 -2l4 2l4 -2M0 0v5" fill="none" stroke="#222" stroke-width="0.7"/><path d="M-4 -2l4 -2l4 2l-4 2z" fill="#d8d8d8" stroke="#222" stroke-width="0.6"/></g><g transform="translate(4,-4)"><path d="M-4 -2l4 -2l4 2v5l-4 2l-4 -2z" fill="#f0f0f0" stroke="#222" stroke-width="0.7"/><path d="M-4 -2l4 2l4 -2M0 0v5" fill="none" stroke="#222" stroke-width="0.7"/></g><path d="M-8 5h6M-5 2v6" stroke="#58d828" stroke-width="2.2"/><path d="M2 3.5q4 -3 5 1q0 3 -4 4" fill="none" stroke="#3868c8" stroke-width="1.4"/><path d="M1.5 5.0l0 -3.5l3.5 2z" fill="#3868c8"/></g>
<g transform="translate(638.0,79.0)" ><g transform="translate(-4,-4)"><path d="M-4 -2l4 -2l4 2v5l-4 2l-4 -2z" fill="#a0a0a0" stroke="#222" stroke-width="0.7"/><path d="M-4 -2l4 2l4 -2M0 0v5" fill="none" stroke="#222" stroke-width="0.7"/><path d="M-4 -2l4 -2l4 2l-4 2z" fill="#d8d8d8" stroke="#222" stroke-width="0.6"/></g><g transform="translate(4,-4)"><path d="M-4 -2l4 -2l4 2v5l-4 2l-4 -2z" fill="#f0f0f0" stroke="#222" stroke-width="0.7"/><path d="M-4 -2l4 2l4 -2M0 0v5" fill="none" stroke="#222" stroke-width="0.7"/></g><rect x="-7.5" y="-4" width="6" height="13" rx="2.5" fill="#111"/><circle cx="-4.5" cy="-1" r="2" fill="#f0c000"/><circle cx="-4.5" cy="5.5" r="2" fill="#20e020"/><rect x="1.5" y="-4" width="6" height="13" rx="2.5" fill="#111"/><circle cx="4.5" cy="-1" r="2" fill="#f01010"/><circle cx="4.5" cy="5.5" r="2" fill="#f0c000"/></g>
<g transform="translate(664.0,79.0)" ><g transform="translate(-4,-4)"><path d="M-4 -2l4 -2l4 2v5l-4 2l-4 -2z" fill="#a0a0a0" stroke="#222" stroke-width="0.7"/><path d="M-4 -2l4 2l4 -2M0 0v5" fill="none" stroke="#222" stroke-width="0.7"/><path d="M-4 -2l4 -2l4 2l-4 2z" fill="#d8d8d8" stroke="#222" stroke-width="0.6"/></g><g transform="translate(4,-4)"><path d="M-4 -2l4 -2l4 2v5l-4 2l-4 -2z" fill="#f0f0f0" stroke="#222" stroke-width="0.7"/><path d="M-4 -2l4 2l4 -2M0 0v5" fill="none" stroke="#222" stroke-width="0.7"/></g><g transform="translate(0,3) scale(1.05)"><path d="M-6 0a6 5.5 0 0 1 10 -4l2 -2v6h-6l2 -2a3.5 3 0 0 0 -5.500 2z" fill="#58c030" stroke="#2a6010" stroke-width="0.4"/><path d="M6 1a6 5.500 0 0 1 -10 4l-2 2v-6h6l-2 2a3.5 3 0 0 0 5.500 -2z" fill="#e8d820" stroke="#807000" stroke-width="0.4"/></g></g>
<g transform="translate(690.0,79.0)" ><g transform="translate(-4,-4)"><path d="M-4 -2l4 -2l4 2v5l-4 2l-4 -2z" fill="#a0a0a0" stroke="#222" stroke-width="0.7"/><path d="M-4 -2l4 2l4 -2M0 0v5" fill="none" stroke="#222" stroke-width="0.7"/><path d="M-4 -2l4 -2l4 2l-4 2z" fill="#d8d8d8" stroke="#222" stroke-width="0.6"/></g><g transform="translate(4,-4)"><path d="M-4 -2l4 -2l4 2v5l-4 2l-4 -2z" fill="#f0f0f0" stroke="#222" stroke-width="0.7"/><path d="M-4 -2l4 2l4 -2M0 0v5" fill="none" stroke="#222" stroke-width="0.7"/></g><path d="M-8.3 4.5h6.6M-5 1.2000000000000002v6.6" stroke="#58d828" stroke-width="2.5"/><path d="M-3 9.500l5 -7" stroke="#222" stroke-width="1"/><path d="M1.5 8h7.0" stroke="#e8e000" stroke-width="2.5"/></g>
<g transform="translate(717.0,79.0)" ><ellipse cx="2" cy="8.5" rx="7" ry="1.6" fill="#50506a" opacity="0.45"/><path d="M-5.2 -6.5v13.0a5.2 2.300 0 0 0 10.4 0v-13.0" fill="url(#gdblue)" stroke="#101830" stroke-width="0.9"/><ellipse cx="0" cy="-6.5" rx="5.2" ry="2.300" fill="#5070b8" stroke="#101830" stroke-width="0.9"/><path d="M0 -3v9" stroke="#d0d8f0" stroke-width="0.900" stroke-dasharray="2 1.500"/></g>
<g transform="translate(743.0,79.0)" ><ellipse cx="2" cy="8.5" rx="7" ry="1.6" fill="#50506a" opacity="0.45"/><path d="M-5.2 -6.5v13.0a5.2 2.300 0 0 0 10.4 0v-13.0" fill="url(#ggrey)" stroke="#101830" stroke-width="0.9"/><ellipse cx="0" cy="-6.5" rx="5.2" ry="2.300" fill="#d0d0d8" stroke="#101830" stroke-width="0.9"/><path d="M-1 -4v12M2 -4v12" stroke="#e8e040" stroke-width="1.100"/></g>
<g transform="translate(769.5,79.0)" ><ellipse cx="2" cy="8.5" rx="7" ry="1.6" fill="#50506a" opacity="0.45"/><path d="M-5.2 -6.5v13.0a5.2 2.300 0 0 0 10.4 0v-13.0" fill="#d4e4f4" stroke="#30d8e8" stroke-width="1.1"/><ellipse cx="0" cy="-6.5" rx="5.2" ry="2.300" fill="#e8f0fc" stroke="#30d8e8" stroke-width="1.1"/><path d="M-3.500 1l3 4l5.500 -8" fill="none" stroke="#30b830" stroke-width="2.600"/></g>
<g transform="translate(795.0,79.0)" ><ellipse cx="2" cy="8.5" rx="8" ry="1.6" fill="#50506a" opacity="0.45"/><path d="M-5.2 -6.5v13.0a5.2 2.300 0 0 0 10.4 0v-13.0" fill="#d4e4f4" stroke="#30d8e8" stroke-width="1.1"/><ellipse cx="0" cy="-6.5" rx="5.2" ry="2.300" fill="#e8f0fc" stroke="#30d8e8" stroke-width="1.1"/><rect x="3" y="-9.500" width="5.500" height="5.500" fill="#f8d8a0" stroke="#e08020" stroke-width="1.200"/></g>
<g transform="translate(821.0,79.0)" ><path d="M-5.2 -6.5v13.0a5.2 2.300 0 0 0 10.4 0v-13.0" fill="#e4ecf8" stroke="#60a0e0" stroke-width="0.8"/><ellipse cx="0" cy="-6.5" rx="5.2" ry="2.300" fill="none" stroke="#60a0e0" stroke-width="0.8"/><path d="M-5 -6l4 13M-2 -4.500l5 12M2 -4.500l-5 12M5 -6l-3 14" stroke="#60a0e0" stroke-width="0.600" fill="none"/></g>
<g transform="translate(847.0,79.0)" ><path d="M-9 -5l9 -4l9 4l-2 7l-7 6l-7 -6z" fill="#284888" stroke="#101c40" stroke-width="0.700"/><path d="M-9 -5l9 -4l9 4l-9 3z" fill="#6890d8"/><path d="M0 -2v10l7 -6l2 -7z" fill="#183060"/></g>
<g transform="translate(889.0,79.0)" ><g transform="translate(0,-1) scale(1.05)"><path d="M2 2l6 6" stroke="#888" stroke-width="3" stroke-linecap="round"/><path d="M2 2l6 6" stroke="#d8d8d8" stroke-width="1.4" stroke-linecap="round"/><circle cx="-1.500" cy="-1.500" r="5.200" fill="#c8dcf4" stroke="#8890a0" stroke-width="1.6"/><path d="M-4.500 -2.500a3.500 3.500 0 0 1 3 -2.800" stroke="#fff" stroke-width="1" fill="none"/></g><path d="M-4 -3.500l4.500 2.800l-4.500 2.800z" fill="#b8c4d8" stroke="#667" stroke-width="0.500"/><rect x="2" y="2" width="7" height="7" fill="#606060" stroke="#222" stroke-width="0.500"/><path d="M-9.500 -7h4M-7.500 -9v4M-9.500 -3.500h4" stroke="#111" stroke-width="0.900"/></g>
<rect x="903.500" y="66.500" width="23" height="24" fill="#ffe478" stroke="#e8c458" stroke-width="1"/>
<g transform="translate(915.0,79.0)" ><g transform="translate(0,-1) scale(1.05)"><path d="M2 2l6 6" stroke="#888" stroke-width="3" stroke-linecap="round"/><path d="M2 2l6 6" stroke="#d8d8d8" stroke-width="1.4" stroke-linecap="round"/><circle cx="-1.500" cy="-1.500" r="5.200" fill="#c8dcf4" stroke="#8890a0" stroke-width="1.6"/><path d="M-4.500 -2.500a3.500 3.500 0 0 1 3 -2.800" stroke="#fff" stroke-width="1" fill="none"/></g><path d="M-4 -3.500l4.500 2.800l-4.500 2.800z" fill="#b8c4d8" stroke="#667" stroke-width="0.500"/><rect x="2" y="2" width="7" height="7" fill="#606060" stroke="#222" stroke-width="0.500"/><path d="M-8 -8l2.5 2.5" stroke="#30c030" stroke-width="1.600"/><path d="M-8 8l2.5 -2.5" stroke="#30c030" stroke-width="1.600"/><path d="M8 -8l-2.5 2.5" stroke="#30c030" stroke-width="1.600"/><path d="M8 8l-2.5 -2.5" stroke="#30c030" stroke-width="1.600"/></g>
<g transform="translate(941.0,79.0)" ><g transform="scale(0.95)"><rect x="-5.500" y="-5" width="11" height="10" fill="url(#gfr)" stroke="#333" stroke-width="0.8"/><path d="M-5.5 -5l-3 -3M-8.5 -8h3M-8.5 -8v3" stroke="#30c030" stroke-width="1.400" fill="none"/><path d="M-5.5 5l-3 3M-8.5 8h3M-8.5 8v-3" stroke="#30c030" stroke-width="1.400" fill="none"/><path d="M5.5 -5l3 -3M8.5 -8h-3M8.5 -8v3" stroke="#30c030" stroke-width="1.400" fill="none"/><path d="M5.5 5l3 3M8.5 8h-3M8.5 8v-3" stroke="#30c030" stroke-width="1.400" fill="none"/></g><text x="0" y="3.500" font-size="8.500" font-weight="bold" text-anchor="middle" font-family="Liberation Sans,sans-serif" fill="#102060">1:1</text></g>
<g transform="translate(967.0,79.0)" ><path d="M-6 6l10 -10" stroke="#30b030" stroke-width="2"/><path d="M8 -8l-7.500 1.500l6 6z" fill="#30b030" stroke="#106010" stroke-width="0.500"/><circle cx="-6" cy="6" r="2.800" fill="#d8d8d8" stroke="#555" stroke-width="0.600"/></g>
<g transform="translate(993.0,79.0)" ><g transform="translate(0,0) scale(1.25)"><path d="M-6 0a6 5.5 0 0 1 10 -4l2 -2v6h-6l2 -2a3.5 3 0 0 0 -5.500 2z" fill="#38b838" stroke="#2a6010" stroke-width="0.4"/><path d="M6 1a6 5.500 0 0 1 -10 4l-2 2v-6h6l-2 2a3.5 3 0 0 0 5.500 -2z" fill="#38b838" stroke="#807000" stroke-width="0.4"/></g></g>
<g transform="translate(1019.0,79.0)" ><g transform="translate(0,-4) scale(1.08)"><path d="M-8.5 1Q0 -7.5 8.5 1Q0 4.5 -8.5 1z" fill="#b8c0dc" stroke="#4a5278" stroke-width="0.6"/><circle cx="0" cy="-0.6" r="3.3" fill="#4868a0"/><circle cx="0" cy="-0.6" r="1.4" fill="#1c2c50"/><path d="M-8.5 0.5Q0 -8.5 8.5 0.5" fill="none" stroke="#2c3458" stroke-width="2"/><path d="M-6 -4l-1.5 -2M-3 -5.5l-.8 -2.3M0 -6v-2.4M3 -5.5l.8 -2.3M6 -4l1.5 -2" stroke="#3c4668" stroke-width="0.7"/></g><circle cx="0" cy="3.500" r="5.500" fill="url(#gsm)" stroke="#a07810" stroke-width="0.500"/><circle cx="-2" cy="2" r="0.800" fill="#222"/><circle cx="2" cy="2" r="0.800" fill="#222"/><path d="M-3 5q3 3 6 0" fill="none" stroke="#222" stroke-width="0.700"/></g>
<g transform="translate(1062.0,79.0)" ><g transform="scale(1.1)"><path d="M-8 3l8 -5l8 4l-8 5z" fill="#e8ecf8" stroke="#889" stroke-width="0.5" opacity="0.8"/><path d="M-2 3v-9" stroke="#1060e0" stroke-width="1.6"/><path d="M-2 -9.500l-2.500 4h5z" fill="#1060e0"/><path d="M-2 3l7 -5" stroke="#30b030" stroke-width="1.6"/><path d="M7.500 -4l-4.500 .8l2.600 3z" fill="#30b030"/><path d="M-2 3l6.500 4" stroke="#e02020" stroke-width="1.600"/><path d="M7.500 8.500l-4.600 -.6l2.200 -3.200z" fill="#e02020"/><circle cx="-2" cy="3" r="1.800" fill="#f4f4f4" stroke="#555" stroke-width="0.5"/></g></g>
<g transform="translate(1088.0,79.0)" ><g transform="translate(3,-4) scale(0.6)"><path d="M-8 3l8 -5l8 4l-8 5z" fill="#e8ecf8" stroke="#889" stroke-width="0.5" opacity="0.8"/><path d="M-2 3v-9" stroke="#1060e0" stroke-width="1.6"/><path d="M-2 -9.500l-2.500 4h5z" fill="#1060e0"/><path d="M-2 3l7 -5" stroke="#30b030" stroke-width="1.6"/><path d="M7.500 -4l-4.500 .8l2.600 3z" fill="#30b030"/><path d="M-2 3l6.500 4" stroke="#e02020" stroke-width="1.600"/><path d="M7.500 8.500l-4.600 -.6l2.200 -3.200z" fill="#e02020"/><circle cx="-2" cy="3" r="1.800" fill="#f4f4f4" stroke="#555" stroke-width="0.5"/></g><path d="M-8 8l5 -8l5 8h-3v0h-4z" fill="#30b030" stroke="#106010" stroke-width="0.500"/><rect x="-3" y="3" width="10" height="5" fill="#d8d8d8" stroke="#666" stroke-width="0.600"/></g>
<g transform="translate(1114.0,79.0)" ><g transform="translate(4,-4) scale(0.6)"><path d="M-8 3l8 -5l8 4l-8 5z" fill="#e8ecf8" stroke="#889" stroke-width="0.5" opacity="0.8"/><path d="M-2 3v-9" stroke="#1060e0" stroke-width="1.6"/><path d="M-2 -9.500l-2.500 4h5z" fill="#1060e0"/><path d="M-2 3l7 -5" stroke="#30b030" stroke-width="1.6"/><path d="M7.500 -4l-4.500 .8l2.600 3z" fill="#30b030"/><path d="M-2 3l6.500 4" stroke="#e02020" stroke-width="1.600"/><path d="M7.500 8.500l-4.600 -.6l2.200 -3.200z" fill="#e02020"/><circle cx="-2" cy="3" r="1.800" fill="#f4f4f4" stroke="#555" stroke-width="0.5"/></g><path d="M-8 -1l5 -3v2.500l6 5v-2l3 5.500l-6 1v-2.500l-6 -5v2z" fill="#30b030" stroke="#106010" stroke-width="0.500"/></g>
<g transform="translate(1157.0,79.0)" ><rect x="-9" y="-9" width="6" height="6" fill="#00b0f0"/><rect x="-3" y="-9" width="6" height="6" fill="#f0e000"/><rect x="3" y="-9" width="6" height="6" fill="#00d000"/><rect x="-9" y="-3" width="6" height="6" fill="#f08000"/><rect x="-3" y="-3" width="6" height="6" fill="#a06000"/><rect x="3" y="-3" width="6" height="6" fill="#f000f0"/><rect x="-9" y="3" width="6" height="6" fill="#0000e0"/><rect x="-3" y="3" width="6" height="6" fill="#00a000"/><rect x="3" y="3" width="6" height="6" fill="#909090"/></g>
<g transform="translate(1183.0,79.0)" ><rect x="-7" y="-8.500" width="14" height="17" fill="#e8f0fc" stroke="#5070b0" stroke-width="1"/><rect x="-5" y="-6.500" width="10" height="2" fill="#f0d080"/><rect x="-5.0" y="-2.0" width="3" height="3" fill="#00b0f0"/><rect x="-1.6" y="-2.0" width="3" height="3" fill="#f0e000"/><rect x="1.7999999999999998" y="-2.0" width="3" height="3" fill="#00d000"/><rect x="-5.0" y="1.4" width="3" height="3" fill="#f08000"/><rect x="-1.6" y="1.4" width="3" height="3" fill="#a06000"/><rect x="1.7999999999999998" y="1.4" width="3" height="3" fill="#f000f0"/><rect x="-5.0" y="4.8" width="3" height="3" fill="#0000e0"/><rect x="-1.6" y="4.8" width="3" height="3" fill="#00a000"/><rect x="1.7999999999999998" y="4.8" width="3" height="3" fill="#909090"/></g>
<g transform="translate(1209.0,79.0)" ><circle cx="0" cy="0" r="9.500" fill="#689838" stroke="#3c6018" stroke-width="0.800"/><path d="M-5 6l9 -9" stroke="#e8e8e8" stroke-width="2.400"/><path d="M5 6l-9 -9" stroke="#c0c8d0" stroke-width="2.400"/><circle cx="-4" cy="-3.500" r="2.400" fill="#d8d8d8"/></g>
<g transform="translate(1235.0,79.0)" ><rect x="-9" y="-9" width="18" height="18" fill="#c8dcf8" stroke="#4060a0" stroke-width="1"/><rect x="-9" y="-9" width="18" height="3.500" fill="#3858a8"/><path d="M-7 -3.500h14" stroke="#c89030" stroke-width="1.600" stroke-dasharray="2 1"/><path d="M-4 7l8 -8M4 7l-8 -8" stroke="#708098" stroke-width="1.800"/></g>
<g transform="translate(1261.0,79.0)" ><rect x="-8.500" y="-7" width="16" height="14" fill="none" stroke="#223" stroke-width="1.200" stroke-dasharray="1.500 1.500"/><path d="M-2 -3l5 -4l6 3l-3 4l-4 .5l-3 -1z" fill="#f0b870" stroke="#805020" stroke-width="0.600"/><path d="M-7.5 4h5.0M-5 1.5v5.0" stroke="#2050e0" stroke-width="1.4"/></g>
<g transform="translate(1287.0,79.0)" ><path d="M-8 8l4 -14l13 -3l-4 14z" fill="#e05858" stroke="#2858d0" stroke-width="1.600"/><path d="M-4 7l4 -14M0.500 6l4 -14M-6.500 2.500l13 -3M-5.500 -2l13 -3" stroke="#f8c8c8" stroke-width="0.700"/></g>
<g transform="translate(17.5,143.0)" ><g opacity="0.5"><g transform="translate(-4,0) scale(1.0)"><path d="M2 2l6 6" stroke="#888" stroke-width="3" stroke-linecap="round"/><path d="M2 2l6 6" stroke="#d8d8d8" stroke-width="1.4" stroke-linecap="round"/><circle cx="-1.500" cy="-1.500" r="5.200" fill="#c8dcf4" stroke="#8890a0" stroke-width="1.6"/><path d="M-4.500 -2.500a3.500 3.500 0 0 1 3 -2.800" stroke="#fff" stroke-width="1" fill="none"/></g></g><g transform="translate(1,0) scale(1.1)"><path d="M2 2l6 6" stroke="#888" stroke-width="3" stroke-linecap="round"/><path d="M2 2l6 6" stroke="#d8d8d8" stroke-width="1.4" stroke-linecap="round"/><circle cx="-1.500" cy="-1.500" r="5.200" fill="#c8dcf4" stroke="#8890a0" stroke-width="1.6"/><path d="M-4.500 -2.500a3.500 3.500 0 0 1 3 -2.800" stroke="#fff" stroke-width="1" fill="none"/></g></g>
<g transform="translate(43.5,143.0)" ><path d="M-8 -7l12 14M-3 -9l12 14" stroke="#3070e0" stroke-width="1.400" stroke-dasharray="4 2"/><g transform="translate(0,0)"><path d="M-5 6l1.500 -4.500l8 -8l3 3l-8 8z" fill="#f0b040" stroke="#704000" stroke-width="0.6"/><path d="M-5 6l1.500 -4.500l3 3z" fill="#f8e0b0" stroke="#704000" stroke-width="0.500"/><path d="M4.500 -6.500l3 3l1.500 -1.500l-3 -3z" fill="#e03030" stroke="#600" stroke-width="0.500"/><path d="M-5 6l.8 -2l1.200 1.200z" fill="#222"/></g><path d="M4.5 -8h5l-2.500 3z" fill="#000"/></g>
<g transform="translate(17.5,168.8)" ><g transform="scale(1.0)"><rect x="-5.500" y="-5" width="11" height="10" fill="url(#gfr)" stroke="#333" stroke-width="0.8"/><path d="M-5.5 -5l-3 -3M-8.5 -8h3M-8.5 -8v3" stroke="#30c030" stroke-width="1.400" fill="none"/><path d="M-5.5 5l-3 3M-8.5 8h3M-8.5 8v-3" stroke="#30c030" stroke-width="1.400" fill="none"/><path d="M5.5 -5l3 -3M8.5 -8h-3M8.5 -8v3" stroke="#30c030" stroke-width="1.400" fill="none"/><path d="M5.5 5l3 3M8.5 8h-3M8.5 8v-3" stroke="#30c030" stroke-width="1.400" fill="none"/></g></g>
<g transform="translate(43.5,168.8)" ><path d="M-3 -6c-6 -2 -7 5 -2 6c8 1 10 9 2 8" fill="none" stroke="#3070e0" stroke-width="1.500"/><g transform="translate(0,0)"><path d="M-5 6l1.500 -4.500l8 -8l3 3l-8 8z" fill="#f0b040" stroke="#704000" stroke-width="0.6"/><path d="M-5 6l1.500 -4.500l3 3z" fill="#f8e0b0" stroke="#704000" stroke-width="0.500"/><path d="M4.500 -6.500l3 3l1.500 -1.500l-3 -3z" fill="#e03030" stroke="#600" stroke-width="0.500"/><path d="M-5 6l.8 -2l1.200 1.200z" fill="#222"/></g><path d="M4.5 -8h5l-2.500 3z" fill="#000"/></g>
<g transform="translate(17.5,194.6)" ><g transform="translate(0,-1) scale(1.05)"><path d="M2 2l6 6" stroke="#888" stroke-width="3" stroke-linecap="round"/><path d="M2 2l6 6" stroke="#d8d8d8" stroke-width="1.4" stroke-linecap="round"/><circle cx="-1.500" cy="-1.500" r="5.200" fill="#c8dcf4" stroke="#8890a0" stroke-width="1.6"/><path d="M-4.500 -2.500a3.500 3.500 0 0 1 3 -2.800" stroke="#fff" stroke-width="1" fill="none"/></g><path d="M-4 -3.500l4.500 2.800l-4.500 2.800z" fill="#b8c4d8" stroke="#667" stroke-width="0.500"/><rect x="2" y="2" width="7" height="7" fill="#606060" stroke="#222" stroke-width="0.500"/><path d="M-9.500 -7h4M-7.500 -9v4M-9.500 -3.500h4" stroke="#111" stroke-width="0.900"/><path d="M4.5 -8h5l-2.500 3z" fill="#000"/></g>
<g transform="translate(43.5,194.6)" ><path d="M-7.500 -7h14v6h-3v4h3v5h-14z" fill="#d8dcea" stroke="#f0e800" stroke-width="1.800"/><path d="M-4.500 0l3.500 4.500l6.500 -9" fill="none" stroke="#38b838" stroke-width="2.800"/><path d="M4.5 -8h5l-2.500 3z" fill="#000"/></g>
<g transform="translate(17.5,220.4)" ><g transform="scale(1.12)"><path d="M-8 3l8 -5l8 4l-8 5z" fill="#e8ecf8" stroke="#889" stroke-width="0.5" opacity="0.8"/><path d="M-2 3v-9" stroke="#1060e0" stroke-width="1.6"/><path d="M-2 -9.500l-2.500 4h5z" fill="#1060e0"/><path d="M-2 3l7 -5" stroke="#30b030" stroke-width="1.6"/><path d="M7.500 -4l-4.500 .8l2.600 3z" fill="#30b030"/><path d="M-2 3l6.500 4" stroke="#e02020" stroke-width="1.600"/><path d="M7.500 8.500l-4.600 -.6l2.200 -3.200z" fill="#e02020"/><circle cx="-2" cy="3" r="1.800" fill="#f4f4f4" stroke="#555" stroke-width="0.5"/></g><path d="M4.5 -8h5l-2.500 3z" fill="#000"/></g>
<g transform="translate(43.5,220.4)" ><path d="M-8 2c2 -12 6 -12 8 0s6 10 9 -2" fill="none" stroke="#3070e0" stroke-width="1.500"/><g transform="translate(0,0)"><path d="M-5 6l1.500 -4.500l8 -8l3 3l-8 8z" fill="#f0b040" stroke="#704000" stroke-width="0.6"/><path d="M-5 6l1.500 -4.500l3 3z" fill="#f8e0b0" stroke="#704000" stroke-width="0.500"/><path d="M4.500 -6.500l3 3l1.500 -1.500l-3 -3z" fill="#e03030" stroke="#600" stroke-width="0.500"/><path d="M-5 6l.8 -2l1.200 1.200z" fill="#222"/></g><path d="M4.5 -8h5l-2.500 3z" fill="#000"/></g>
<g transform="translate(17.5,246.4)" ><ellipse cx="0" cy="4.500" rx="7.500" ry="4.500" fill="#c8a070" stroke="#604020" stroke-width="0.600"/><circle cx="-3.500" cy="5" r="1.600" fill="#2050e0"/><circle cx="0.500" cy="6.500" r="1.600" fill="#20b030"/><circle cx="3" cy="3" r="1.600" fill="#e02020"/><path d="M-7.500 -7h9l3 2h-9zM-7.500 -4.500h9l3 2h-9z" fill="#7080e0" stroke="#334" stroke-width="0.400"/><path d="M-7.500 -2h9l3 2h-9z" fill="#e8e8e8" stroke="#334" stroke-width="0.400"/><path d="M8.500 -8.500l-6.500 10" stroke="#a05820" stroke-width="1.600"/><path d="M2 1.500l-1.500 3" stroke="#333" stroke-width="1.800"/><path d="M4.5 -8h5l-2.500 3z" fill="#000"/></g>
<g transform="translate(43.5,246.4)" ><path d="M-8 8l4 -14l13 -3l-4 14z" fill="#a8ccf8" stroke="#2868e0" stroke-width="1.600"/><path d="M-1.500 6.500l4 -14M-6 1l13 -3" stroke="#2868e0" stroke-width="1.200"/><path d="M4.5 -8h5l-2.500 3z" fill="#000"/></g>
<g transform="translate(17.5,272.4)" ><path d="M-7 -1a7 6 0 0 1 11 -4.500l2 -2.500v7h-6.500l2 -2.200a4 3.400 0 0 0 -5.500 2.200z" fill="#6098e0" stroke="#3060a8" stroke-width="0.500"/><path d="M7 2a7 6 0 0 1 -11 4.500l-2 2.500v-7h6.500l-2 2.200a4 3.400 0 0 0 5.500 -2.200z" fill="#6098e0" stroke="#3060a8" stroke-width="0.500"/><path d="M4.5 -8h5l-2.500 3z" fill="#000"/></g>
<g transform="translate(43.5,272.4)" ><ellipse cx="2" cy="8" rx="7" ry="1.800" fill="#667" opacity="0.500"/><path d="M-7 -4l7 -3.500l7 3.500v8l-7 3.500l-7 -3.500z" fill="#888" stroke="#333" stroke-width="0.600"/><path d="M-7 -4l7 -3.500l7 3.500l-7 3.500z" fill="#d0d0d0" stroke="#333" stroke-width="0.500"/><path d="M0 -0.500v8l7 -3.500v-8z" fill="#606060"/><path d="M4.5 -8h5l-2.500 3z" fill="#000"/></g>
<g transform="translate(17.5,298.3)" ><ellipse cx="0" cy="8.500" rx="6" ry="1.500" fill="#667" opacity="0.500"/><text x="0" y="6" font-size="19" font-weight="bold" text-anchor="middle" font-family="Liberation Sans,sans-serif" fill="#5080d0" stroke="#2850a0" stroke-width="0.400">?</text><path d="M4.5 -8h5l-2.500 3z" fill="#000"/></g>
<g transform="translate(43.5,298.3)" ><path d="M-7.500 -6v14M7.500 -6v14" stroke="#333" stroke-width="1.200"/><path d="M-6 -3.500h12" stroke="#e8e000" stroke-width="1.800"/><path d="M-7 -3.500l3 -2.500v5zM7 -3.500l-3 -2.500v5z" fill="#e8e000"/><path d="M4.5 -8h5l-2.500 3z" fill="#000"/></g>
<g transform="translate(17.5,324.2)" ><ellipse cx="2" cy="8.500" rx="6" ry="1.500" fill="#667" opacity="0.500"/><path d="M-6 -4h12l-1.500 12h-9z" fill="#a8d0f0" stroke="#4878a8" stroke-width="0.700"/><ellipse cx="0" cy="-4" rx="6.500" ry="2" fill="#88b8e0" stroke="#4878a8" stroke-width="0.700"/><path d="M-2 -5l2 -3.500l2 3.500z" fill="#e8e000"/><path d="M-2.500 0l5 5M2.500 0l-5 5" stroke="#d8f0a0" stroke-width="1.200"/><path d="M4.5 -8h5l-2.500 3z" fill="#000"/></g>
<g transform="translate(43.5,324.2)" ><g transform=""><ellipse cx="1" cy="8" rx="7" ry="1.600" fill="#889" opacity="0.400"/><path d="M-8 -2l7 -7v4.500c7 0 9 5 6 11c-1 -4 -3 -5.500 -6 -5.500v4z" fill="#a8a8a8" stroke="#808080" stroke-width="0.600"/></g><path d="M4.5 -8h5l-2.500 3z" fill="#000"/></g>
<g transform="translate(17.5,350.3)" ><path d="M-8.500 -8v12" stroke="#555" stroke-width="2.200"/><path d="M-8 4l8 -4l8 4l-8 4.500z" fill="#f08818"/><circle cx="1" cy="-1" r="5.500" fill="none" stroke="#904020" stroke-width="1.100"/><path d="M1 -9v16M-7 -1h16M-4.500 -6.500l11 11M6.500 -6.500l-11 11" stroke="#904020" stroke-width="0.900"/><circle cx="1" cy="-1" r="1.800" fill="#f0b020"/><path d="M-6 5l6 -3M-3 7l6 -3M0 8l6 -3" stroke="#f8b868" stroke-width="0.800"/><path d="M4.5 -8h5l-2.500 3z" fill="#000"/></g>
<g transform="translate(43.5,350.3)" ><g transform="translate(2,3) scale(0.8)"><path d="M-6 -8h8l4 4v12h-12z" fill="#e8f0fc" stroke="#111" stroke-width="1"/><path d="M2 -8v4h4" fill="#fff" stroke="#111" stroke-width="0.800"/></g><g transform="translate(-1,-1) scale(0.9)"><path d="M-8 -4h5l1.500 1.500h7.500v9h-14z" fill="#e8c050" stroke="#a07818" stroke-width="0.600"/><path d="M-8 6.500l2.500 -7h14l-2.500 7z" fill="#f8dc80" stroke="#a07818" stroke-width="0.600"/></g><path d="M-1 -6c1 -3 5 -3 6 -1l2 -1l-1 5l-4.500 -1.500l2 -1c-1 -1 -3 -1 -3.500 .5z" fill="#28b028"/></g>
<path d="M3 122.5h55" stroke="#a4a8b8" stroke-width="2" stroke-dasharray="2 2"/>
<path d="M3 375.5h55" stroke="#a4a8b8" stroke-width="2" stroke-dasharray="2 2"/>
<rect x="64" y="113" width="24" height="24" fill="#7c8296"/>
<rect x="92" y="113" width="24" height="24" fill="#7c8296"/>
<rect x="120" y="113" width="24" height="24" fill="#7c8296"/>
<rect x="148" y="113" width="24" height="24" fill="#7c8296"/>
<rect x="176" y="113" width="24" height="24" fill="#7c8296"/>
<rect x="204" y="113" width="24" height="24" fill="#7c8296"/>
<rect x="232" y="113" width="24" height="24" fill="#7c8296"/>
<rect x="260" y="113" width="24" height="24" fill="#7c8296"/>
<rect x="288" y="113" width="24" height="24" fill="#7c8296"/>
<rect x="316" y="113" width="24" height="24" fill="#7c8296"/>
<rect x="344" y="113" width="24" height="24" fill="#7c8296"/>
<g transform="translate(76.0,125.0)" ><path d="M-7.500 -6h15M-7.500 0h15M-7.500 6h15" stroke="#3c4c7c" stroke-width="3.400"/><path d="M-7.500 -6h15M-7.500 0h15M-7.500 6h15" stroke="#54689c" stroke-width="1.400"/></g>
<g transform="translate(104.0,125.0)" ><g transform="scale(1.0)"><rect x="-5.500" y="-5" width="11" height="10" fill="url(#gfr)" stroke="#333" stroke-width="0.8"/><path d="M-5.5 -5l-3 -3M-8.5 -8h3M-8.5 -8v3" stroke="#30c030" stroke-width="1.400" fill="none"/><path d="M-5.5 5l-3 3M-8.5 8h3M-8.5 8v-3" stroke="#30c030" stroke-width="1.400" fill="none"/><path d="M5.5 -5l3 -3M8.5 -8h-3M8.5 -8v3" stroke="#30c030" stroke-width="1.400" fill="none"/><path d="M5.5 5l3 3M8.5 8h-3M8.5 8v-3" stroke="#30c030" stroke-width="1.400" fill="none"/></g></g>
<g transform="translate(132.0,125.0)" ><g opacity="0.500"><g transform="translate(-4,0) scale(1.0)"><path d="M2 2l6 6" stroke="#888" stroke-width="3" stroke-linecap="round"/><path d="M2 2l6 6" stroke="#d8d8d8" stroke-width="1.4" stroke-linecap="round"/><circle cx="-1.500" cy="-1.500" r="5.200" fill="#c8dcf4" stroke="#8890a0" stroke-width="1.6"/><path d="M-4.500 -2.500a3.500 3.500 0 0 1 3 -2.800" stroke="#fff" stroke-width="1" fill="none"/></g></g><g transform="translate(1,0) scale(1.1)"><path d="M2 2l6 6" stroke="#888" stroke-width="3" stroke-linecap="round"/><path d="M2 2l6 6" stroke="#d8d8d8" stroke-width="1.4" stroke-linecap="round"/><circle cx="-1.500" cy="-1.500" r="5.200" fill="#c8dcf4" stroke="#8890a0" stroke-width="1.6"/><path d="M-4.500 -2.500a3.500 3.500 0 0 1 3 -2.800" stroke="#fff" stroke-width="1" fill="none"/></g></g>
<g transform="translate(160.0,126.0)" ><g transform="scale(1.15)"><path d="M-8 3l8 -5l8 4l-8 5z" fill="#e8ecf8" stroke="#889" stroke-width="0.5" opacity="0.8"/><path d="M-2 3v-9" stroke="#1060e0" stroke-width="1.6"/><path d="M-2 -9.500l-2.500 4h5z" fill="#1060e0"/><path d="M-2 3l7 -5" stroke="#30b030" stroke-width="1.6"/><path d="M7.500 -4l-4.500 .8l2.600 3z" fill="#30b030"/><path d="M-2 3l6.500 4" stroke="#e02020" stroke-width="1.600"/><path d="M7.500 8.500l-4.600 -.6l2.200 -3.200z" fill="#e02020"/><circle cx="-2" cy="3" r="1.800" fill="#f4f4f4" stroke="#555" stroke-width="0.5"/></g></g>
<g transform="translate(188.0,125.0)" ><g transform="scale(1.15)"><path d="M0 -8v9M0 1l-8 4M0 1l8 4" fill="none" stroke="#111" stroke-width="0.900"/><polygon points="-8,-4 0,-8 8,-4 0,0" fill="#38d030"/><path d="M-8 -4l8 -4l8 4v9l-8 4l-8 -4zM-8 -4l8 4l8 -4M0 0v9" fill="none" stroke="#111" stroke-width="1.300"/></g></g>
<g transform="translate(216.0,125.0)" ><g transform="scale(1.15)"><polygon points="-8,5 0,1 8,5 0,9" fill="#30c828"/><path d="M0 -8v9M0 1l-8 4M0 1l8 4" fill="none" stroke="#111" stroke-width="0.900"/><path d="M-8 -4l8 -4l8 4v9l-8 4l-8 -4zM-8 -4l8 4l8 -4M0 0v9" fill="none" stroke="#111" stroke-width="1.300"/></g></g>
<g transform="translate(244.0,125.0)" ><g transform="scale(1.15)"><polygon points="-8,-4 0,-8 0,1 -8,5" fill="#30c828"/><path d="M0 -8v9M0 1l-8 4M0 1l8 4" fill="none" stroke="#111" stroke-width="0.900"/><polygon points="-8,-4 0,0 0,9 -8,5" fill="#30c828"/><path d="M-8 -4l8 -4l8 4v9l-8 4l-8 -4zM-8 -4l8 4l8 -4M0 0v9" fill="none" stroke="#111" stroke-width="1.300"/></g></g>
<g transform="translate(272.0,125.0)" ><g transform="scale(1.15)"><path d="M0 -8v9M0 1l-8 4M0 1l8 4" fill="none" stroke="#111" stroke-width="0.900"/><polygon points="0,0 8,-4 8,5 0,9" fill="#38d030"/><path d="M-8 -4l8 -4l8 4v9l-8 4l-8 -4zM-8 -4l8 4l8 -4M0 0v9" fill="none" stroke="#111" stroke-width="1.300"/></g></g>
<g transform="translate(300.0,125.0)" ><g transform="scale(1.15)"><path d="M0 -8v9M0 1l-8 4M0 1l8 4" fill="none" stroke="#111" stroke-width="0.900"/><polygon points="-8,-4 0,0 0,9 -8,5" fill="#30c828"/><path d="M-8 -4l8 -4l8 4v9l-8 4l-8 -4zM-8 -4l8 4l8 -4M0 0v9" fill="none" stroke="#111" stroke-width="1.300"/></g></g>
<g transform="translate(328.0,125.0)" ><g transform="scale(1.15)"><polygon points="0,-8 8,-4 8,5 0,1" fill="#30c828"/><path d="M0 -8v9M0 1l-8 4M0 1l8 4" fill="none" stroke="#111" stroke-width="0.900"/><path d="M-8 -4l8 -4l8 4v9l-8 4l-8 -4zM-8 -4l8 4l8 -4M0 0v9" fill="none" stroke="#111" stroke-width="1.300"/></g></g>
<g transform="translate(356.0,125.0)" ><g transform="scale(1.15)"><polygon points="-8,-4 0,-8 8,-4 0,0" fill="#50e040"/><polygon points="-8,-4 0,0 0,9 -8,5" fill="#28b820"/><polygon points="0,0 8,-4 8,5 0,9" fill="#38d030"/><path d="M-8 -4l8 -4l8 4v9l-8 4l-8 -4zM-8 -4l8 4l8 -4M0 0v9" fill="none" stroke="#108010" stroke-width="0.700"/></g></g>
<rect x="64" y="141" width="24" height="24" fill="#7c8296"/>
<rect x="64" y="169" width="24" height="24" fill="#7c8296"/>
<rect x="64.500" y="197.500" width="23" height="23" fill="#8a8878" stroke="#e8c860" stroke-width="1.400"/>
<rect x="64" y="225" width="24" height="24" fill="#7c8296"/>
<rect x="64" y="253" width="24" height="24" fill="#7c8296"/>
<g transform="translate(76.0,153.0)" ><path d="M-5.2 -6.5v13.0a5.2 2.300 0 0 0 10.4 0v-13.0" fill="none" stroke="#222" stroke-width="0.9"/><ellipse cx="0" cy="-6.5" rx="5.2" ry="2.300" fill="none" stroke="#222" stroke-width="0.9"/><path d="M-5.200 6.500a5.200 2.300 0 0 1 10.400 0" fill="none" stroke="#222" stroke-width="0.6"/></g>
<g transform="translate(76.0,181.0)" ><path d="M-5.2 -6.5v13.0a5.2 2.300 0 0 0 10.4 0v-13.0" fill="none" stroke="#222" stroke-width="0.9"/><ellipse cx="0" cy="-6.5" rx="5.2" ry="2.300" fill="none" stroke="#222" stroke-width="0.9"/></g>
<g transform="translate(76.0,209.0)" ><ellipse cx="2" cy="8.5" rx="6" ry="1.6" fill="#50506a" opacity="0.45"/><path d="M-5.2 -6.5v13.0a5.2 2.300 0 0 0 10.4 0v-13.0" fill="url(#gblue)" stroke="#182848" stroke-width="0.9"/><ellipse cx="0" cy="-6.5" rx="5.2" ry="2.300" fill="#6890d8" stroke="#182848" stroke-width="0.9"/></g>
<g transform="translate(76.0,237.0)" ><ellipse cx="2" cy="8.5" rx="6" ry="1.6" fill="#50506a" opacity="0.45"/><path d="M-5.2 -6.5v13.0a5.2 2.300 0 0 0 10.4 0v-13.0" fill="url(#glblue)" stroke="#505870" stroke-width="0.9"/><ellipse cx="0" cy="-6.5" rx="5.2" ry="2.300" fill="#e8f0fc" stroke="#505870" stroke-width="0.9"/></g>
<g transform="translate(76.0,265.0)" ><path d="M-5.2 -6.5v13.0a5.2 2.300 0 0 0 10.4 0v-13.0" fill="#8c90a0" stroke="#222" stroke-width="0.9"/><ellipse cx="0" cy="-6.5" rx="5.2" ry="2.300" fill="none" stroke="#222" stroke-width="0.9"/><path d="M-5 -6l4 13M-2 -4.500l5 12M2 -4.500l-5 12M5 -6l-3 14" stroke="#222" stroke-width="0.600" fill="none"/></g></svg>
<svg class="abs" style="left:0;top:0" width="1920" height="1048" viewBox="0 0 1920 1048"><g><polygon points="137.800,931.500 155.500,941.800 140,951 122.900,941.800" fill="#8a9a58" opacity="0.800"/><polygon points="121.200,920.100 138.300,910.900 138.300,950.400 121.200,941" fill="#c8d0e8" opacity="0.350"/><path d="M121.200 920.100L138.300 910.900V950.400M121.200 920.100L138.300 931.500" fill="none" stroke="#e0e0e0" stroke-width="0.800"/><path d="M137.800 931.500L155.500 941.800L140 951" fill="none" stroke="#f0f000" stroke-width="1"/><path d="M119.700 941V889" stroke="#00a0a8" stroke-width="2"/><path d="M119.700 880.500l-4.200 9.500a4.200 1.500 0 0 0 8.400 0z" fill="#00d0e0"/><path d="M120 941.500L150 924.500" stroke="#00b800" stroke-width="2"/><path d="M156 921.300l-9 .5l3.500 6z" fill="#00c800"/><path d="M120 942L139 952.500" stroke="#e80000" stroke-width="2.200"/><path d="M145.500 956.300l-9.500 -1l3.500 -6.200z" fill="#e00000"/><circle cx="119.700" cy="941.800" r="3.800" fill="#707070"/><circle cx="118.700" cy="940.800" r="1.500" fill="#a0a0a0"/><text x="115.500" y="878.500" font-family="Liberation Sans,sans-serif" font-size="11.500" fill="#d8d8d8">Z</text><text x="155.500" y="922.500" font-family="Liberation Sans,sans-serif" font-size="11" fill="#e81010">Y</text><text x="145" y="964" font-family="Liberation Sans,sans-serif" font-size="11" fill="#d8d8d8">X</text></g>
<g transform="translate(1900.0,1010.0)" ><circle r="6.500" fill="url(#gglobe)"/><path d="M-4 -3c2 -2 4 -1 3 1c-1 2 -3 1 -2 3c-2 0 -3 -2 -1 -4zM1 2c2 -1 4 -2 4 1c-1 2 -3 3 -4 1z" fill="#20c020"/></g>
<rect x="1132.5" y="1023" width="1" height="15" fill="#9a9eac"/>
<rect x="1175.3" y="1023" width="1" height="15" fill="#9a9eac"/>
<rect x="1206.3" y="1023" width="1" height="15" fill="#9a9eac"/>
<rect x="1237.5" y="1023" width="1" height="15" fill="#9a9eac"/>
<rect x="1268.3" y="1023" width="1" height="15" fill="#9a9eac"/>
<rect x="1299.2" y="1023" width="1" height="15" fill="#9a9eac"/>
<rect x="1330.5" y="1023" width="1" height="15" fill="#9a9eac"/>
<rect x="1361.7" y="1023" width="1" height="15" fill="#9a9eac"/>
<rect x="1392.5" y="1023" width="1" height="15" fill="#9a9eac"/>
<rect x="1579" y="1023" width="1" height="15" fill="#9a9eac"/>
<rect x="1654" y="1023" width="1" height="15" fill="#9a9eac"/>
<rect x="1182.500" y="1022.500" width="16" height="16" fill="#b4b8c6" stroke="#7484a4" stroke-width="1"/>
<g transform="translate(1190.5,1030.5)" ><g transform="scale(0.85)"><path d="M-7 -1a7 6 0 0 1 11 -4.500l2 -2.500v7h-6.500l2 -2.200a4 3.400 0 0 0 -5.500 2.200z" fill="#f08890" stroke="#c04050" stroke-width="0.600"/><path d="M7 2a7 6 0 0 1 -11 4.500l-2 2.500v-7h6.500l-2 2.200a4 3.400 0 0 0 5.500 -2.200z" fill="#f08890" stroke="#c04050" stroke-width="0.600"/></g></g>
<rect x="1212" y="1021" width="18" height="18" fill="#ffe070"/>
<g transform="translate(1221.0,1030.0)" ><path d="M-7 -7l4 2l3 -3l1 4l4 0l-3 3l2 4l-4 -1l-3 3l-1 -4l-4 -1l3 -2z" fill="#e080e0" stroke="#f0a020" stroke-width="0.600"/><path d="M-1 -2l8 8l-3 .5l2 3l-1.500 1l-2 -3.500l-2.500 2z" fill="#d8d8e8" stroke="#445" stroke-width="0.700"/></g>
<g transform="translate(1253.0,1030.0)" ><rect x="-6" y="-1" width="9" height="9" fill="#c8dcf8" stroke="#3060c0" stroke-width="1"/><path d="M-6 3.500h9M-1.500 -1v9" stroke="#3060c0" stroke-width="0.800"/><path d="M-5 -2l5 -5l7 1l-1 4l-5 1l-3 2z" fill="#f0b870" stroke="#805020" stroke-width="0.600"/></g>
<g transform="translate(1283.5,1030.0)" ><ellipse cx="1" cy="7.500" rx="6" ry="1.500" fill="#667" opacity="0.500"/><text x="0" y="6" font-size="19" font-weight="bold" text-anchor="middle" font-family="Liberation Sans,sans-serif" fill="#5080d0" stroke="#2850a0" stroke-width="0.400">?</text></g>
<g transform="translate(1314.0,1030.0)" ><path d="M-6 -6l4 -2l4 2v5l-4 2l-4 -2z" fill="#4888e8" stroke="#1840a0" stroke-width="0.600"/><path d="M-6 -6l4 2l4 -2M-2 -4v5" stroke="#1840a0" stroke-width="0.600" fill="none"/><path d="M0 1l4 -2l4 2v5l-4 2l-4 -2z" fill="#70a0a8" stroke="#203040" stroke-width="0.600"/><path d="M0 1l4 2l4 -2M4 3v5" stroke="#203040" stroke-width="0.600" fill="none"/><path d="M-9 4h6M-5 1l3 3l-3 3" fill="none" stroke="#e81010" stroke-width="1.500"/></g>
<rect x="1336" y="1021" width="18" height="18" fill="#ffe070"/>
<g transform="translate(1345.0,1030.0)" ><path d="M-7 -4l7 -3l7 3v8l-7 3l-7 -3z" fill="#88b0b0" stroke="#2050d0" stroke-width="1"/><path d="M-7 -4l7 -3l7 3l-7 3z" fill="#e040e0" stroke="#8020a0" stroke-width="0.500"/><path d="M0 -1v8" stroke="#2050d0" stroke-width="1"/></g>
<g transform="translate(1372.0,1031.0)" ><rect x="-5" y="-7" width="10" height="13" fill="#f0f0f0" stroke="#556" stroke-width="1"/></g>
<g transform="translate(1405.0,1030.0)" ><circle r="7" fill="#f4f4f4" stroke="#28a028" stroke-width="2"/><path d="M0 -4v5" stroke="#2030a0" stroke-width="1.500"/></g>
<g transform="translate(1432.0,1031.0)" ><rect x="-7" y="-6" width="14" height="12" fill="#e8e8f0" stroke="#667" stroke-width="1"/><path d="M0 -6v12" stroke="#667" stroke-width="1"/></g></svg>
<div class="st" style="left:1487px;top:1003px">绝对 XY 上视图</div>
<div class="st" style="left:1463px;top:1024px">LS: 1.00 PS: 1.00</div>
<div class="abs" style="left:1340px;top:1004px;width:134px;height:15px;background:#fff"></div><svg class="abs" style="left:0;top:0" width="1920" height="1048" viewBox="0 0 1920 1048"><path d="M1334.500 1005v13M1336.500 1006v13" stroke="#a0a4b4" stroke-width="1" stroke-dasharray="1 2"/><circle cx="1466" cy="1010" r="3.200" fill="none" stroke="#7890c0" stroke-width="1.200"/><rect x="1384" y="1009.500" width="181" height="22" rx="3" fill="#fff" stroke="#d0d4dc" stroke-width="0.800"/><g transform="rotate(-8 1373 1019)"><rect x="1360" y="1007" width="26" height="25" rx="5" fill="#f05a22"/><text x="1373" y="1028.500" text-anchor="middle" font-family="Liberation Sans,sans-serif" font-weight="bold" font-style="italic" font-size="24" fill="#fff">S</text></g><text x="1392" y="1027" font-family="Liberation Sans,Noto Sans CJK SC,sans-serif" font-weight="bold" font-size="17" fill="#1e78d8">中</text><circle cx="1416.500" cy="1016" r="1.800" fill="none" stroke="#1e78d8" stroke-width="1.200"/><path d="M1423 1020.500q1.500 2.500 -1.500 5" fill="none" stroke="#1e78d8" stroke-width="1.800"/><circle cx="1443" cy="1020.500" r="7" fill="none" stroke="#1e78d8" stroke-width="1.500"/><circle cx="1440.500" cy="1018.500" r="1" fill="#1e78d8"/><circle cx="1445.500" cy="1018.500" r="1" fill="#1e78d8"/><path d="M1439.500 1022.500q3.500 3.500 7 0" fill="none" stroke="#1e78d8" stroke-width="1.200"/><rect x="1463" y="1012.500" width="5.500" height="10.500" rx="2.700" fill="#1e78d8"/><path d="M1460.500 1020.500a5.300 5.300 0 0 0 10.600 0M1465.800 1026v3" fill="none" stroke="#1e78d8" stroke-width="1.400"/><rect x="1480" y="1014.500" width="16" height="11" rx="1.500" fill="#1e78d8"/><path d="M1482.500 1017.500h11M1482.500 1020h11M1484.500 1022.800h7" stroke="#fff" stroke-width="1" stroke-dasharray="1.500 1"/><circle cx="1510" cy="1016.500" r="3" fill="#b8c0cc"/><path d="M1504 1027c0 -6 12 -6 12 0z" fill="#b8c0cc"/><rect x="1511.500" y="1022" width="6" height="5" rx="1" fill="#d0d6e0"/><path d="M1524 1016l4 -2.500q4 2.500 8 0l4 2.500l-2 3.500l-2 -1v8.500h-8v-8.500l-2 1z" fill="#1e78d8"/><rect x="1546" y="1013" width="6.500" height="6.500" fill="#1e78d8"/><rect x="1554" y="1013" width="6.500" height="6.500" fill="#1e78d8"/><rect x="1546" y="1021" width="6.500" height="6.500" fill="#1e78d8"/><rect x="1554" y="1021" width="6.500" height="6.500" fill="#1e78d8"/></svg>
</body>
</html>
